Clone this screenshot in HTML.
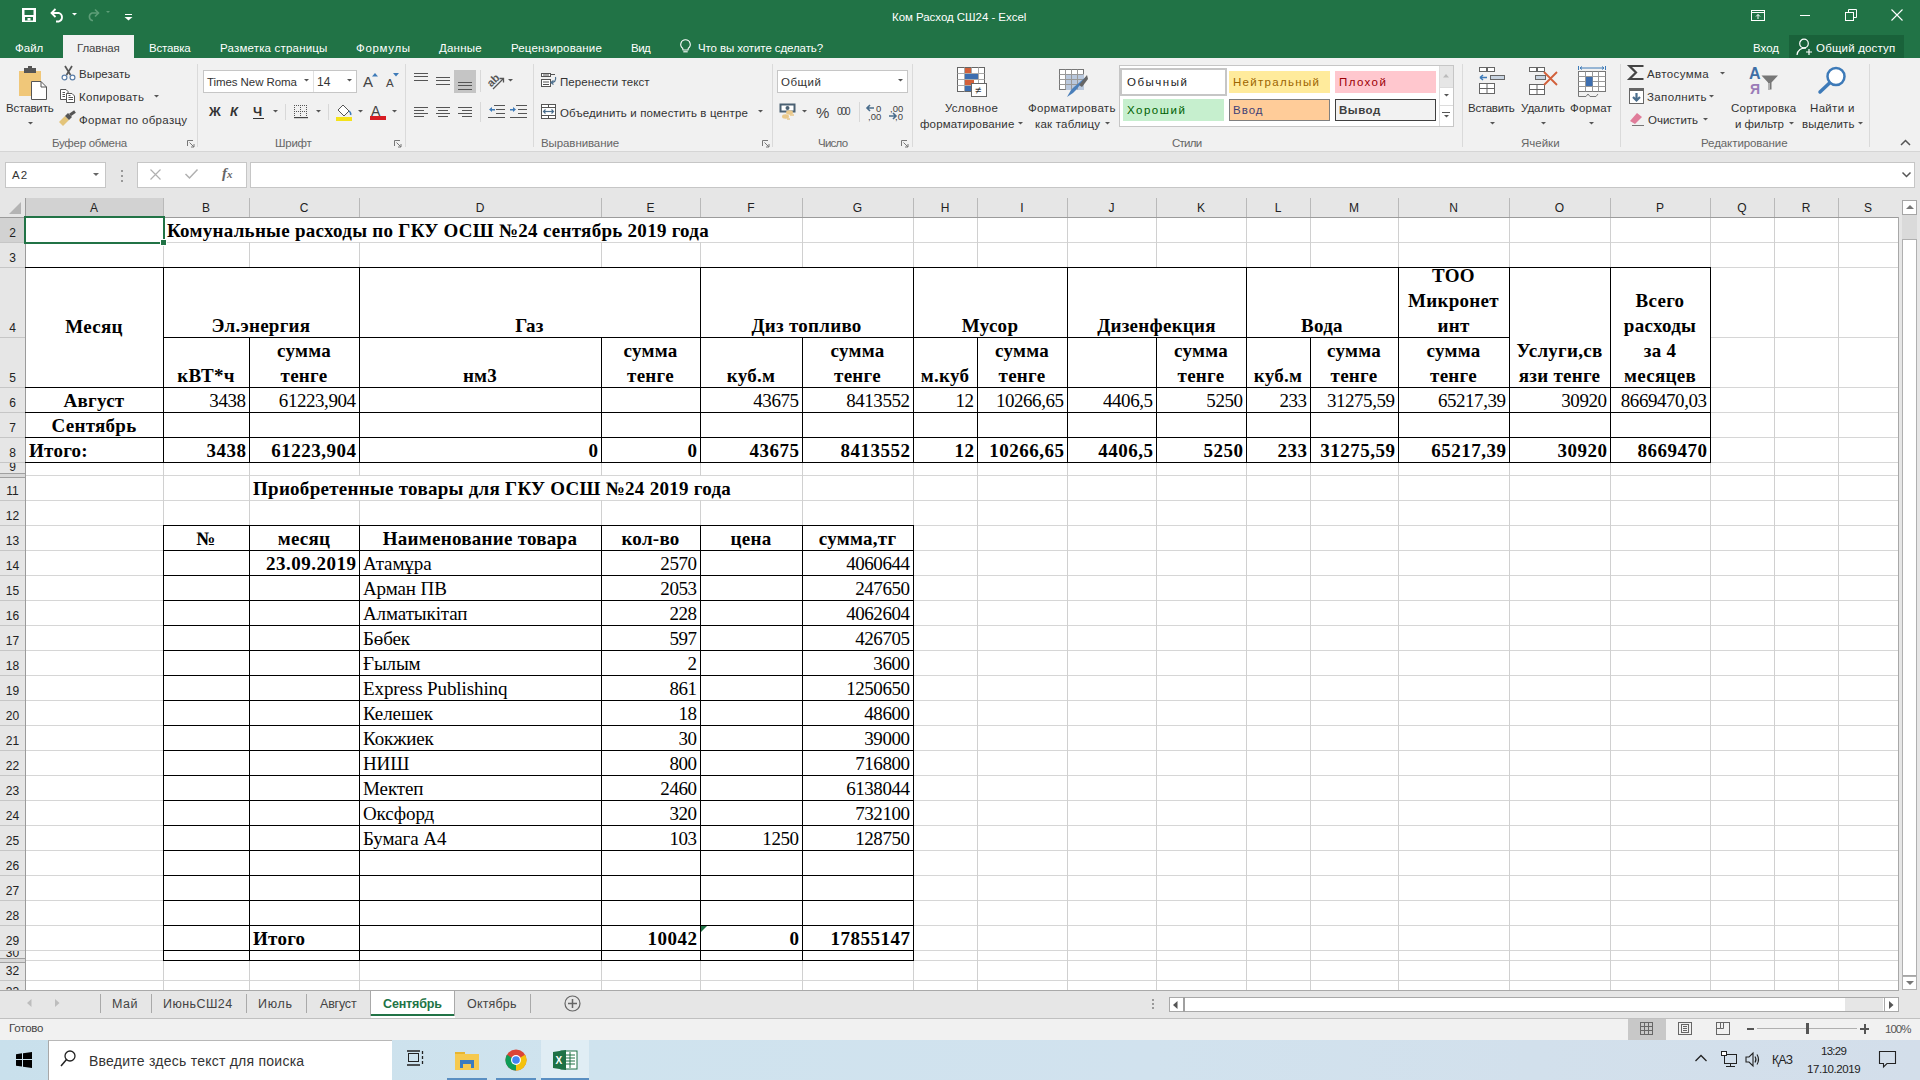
<!DOCTYPE html><html><head><meta charset="utf-8"><style>
*{margin:0;padding:0;box-sizing:border-box}
html,body{width:1920px;height:1080px;overflow:hidden;background:#fff;position:relative}
.a{position:absolute}
.x{position:absolute;white-space:nowrap}
svg{position:absolute;overflow:visible}
</style></head><body>
<div class="a" style="left:0px;top:188px;width:1920px;height:802px;background:#e6e6e6;"></div>
<div class="a" style="left:26px;top:218px;width:1872px;height:772px;background:#fff;"></div>
<div class="a" style="left:26px;top:198px;width:137px;height:19px;background:#d2d2d2;"></div>
<div class="a" style="left:0px;top:218px;width:25px;height:24px;background:#d2d2d2;"></div>
<div class="a" style="left:0px;top:217px;width:1898px;height:1px;background:#9b9b9b;"></div>
<div class="a" style="left:25px;top:198px;width:1px;height:792px;background:#9b9b9b;"></div>
<div class="a" style="left:163px;top:198px;width:1px;height:19px;background:#b9b9b9;"></div>
<div class="a" style="left:249px;top:198px;width:1px;height:19px;background:#b9b9b9;"></div>
<div class="a" style="left:359px;top:198px;width:1px;height:19px;background:#b9b9b9;"></div>
<div class="a" style="left:601px;top:198px;width:1px;height:19px;background:#b9b9b9;"></div>
<div class="a" style="left:700px;top:198px;width:1px;height:19px;background:#b9b9b9;"></div>
<div class="a" style="left:802px;top:198px;width:1px;height:19px;background:#b9b9b9;"></div>
<div class="a" style="left:913px;top:198px;width:1px;height:19px;background:#b9b9b9;"></div>
<div class="a" style="left:977px;top:198px;width:1px;height:19px;background:#b9b9b9;"></div>
<div class="a" style="left:1067px;top:198px;width:1px;height:19px;background:#b9b9b9;"></div>
<div class="a" style="left:1156px;top:198px;width:1px;height:19px;background:#b9b9b9;"></div>
<div class="a" style="left:1246px;top:198px;width:1px;height:19px;background:#b9b9b9;"></div>
<div class="a" style="left:1310px;top:198px;width:1px;height:19px;background:#b9b9b9;"></div>
<div class="a" style="left:1398px;top:198px;width:1px;height:19px;background:#b9b9b9;"></div>
<div class="a" style="left:1509px;top:198px;width:1px;height:19px;background:#b9b9b9;"></div>
<div class="a" style="left:1610px;top:198px;width:1px;height:19px;background:#b9b9b9;"></div>
<div class="a" style="left:1710px;top:198px;width:1px;height:19px;background:#b9b9b9;"></div>
<div class="a" style="left:1774px;top:198px;width:1px;height:19px;background:#b9b9b9;"></div>
<div class="a" style="left:1838px;top:198px;width:1px;height:19px;background:#b9b9b9;"></div>
<div class="x" style="top:202.00px;font-size:12px;line-height:12px;color:#222;font-family:'Liberation Sans',sans-serif;left:-406.0px;width:1000px;text-align:center;">A</div>
<div class="x" style="top:202.00px;font-size:12px;line-height:12px;color:#222;font-family:'Liberation Sans',sans-serif;left:-294.0px;width:1000px;text-align:center;">B</div>
<div class="x" style="top:202.00px;font-size:12px;line-height:12px;color:#222;font-family:'Liberation Sans',sans-serif;left:-196.0px;width:1000px;text-align:center;">C</div>
<div class="x" style="top:202.00px;font-size:12px;line-height:12px;color:#222;font-family:'Liberation Sans',sans-serif;left:-20.0px;width:1000px;text-align:center;">D</div>
<div class="x" style="top:202.00px;font-size:12px;line-height:12px;color:#222;font-family:'Liberation Sans',sans-serif;left:150.5px;width:1000px;text-align:center;">E</div>
<div class="x" style="top:202.00px;font-size:12px;line-height:12px;color:#222;font-family:'Liberation Sans',sans-serif;left:251.0px;width:1000px;text-align:center;">F</div>
<div class="x" style="top:202.00px;font-size:12px;line-height:12px;color:#222;font-family:'Liberation Sans',sans-serif;left:357.5px;width:1000px;text-align:center;">G</div>
<div class="x" style="top:202.00px;font-size:12px;line-height:12px;color:#222;font-family:'Liberation Sans',sans-serif;left:445.0px;width:1000px;text-align:center;">H</div>
<div class="x" style="top:202.00px;font-size:12px;line-height:12px;color:#222;font-family:'Liberation Sans',sans-serif;left:522.0px;width:1000px;text-align:center;">I</div>
<div class="x" style="top:202.00px;font-size:12px;line-height:12px;color:#222;font-family:'Liberation Sans',sans-serif;left:611.5px;width:1000px;text-align:center;">J</div>
<div class="x" style="top:202.00px;font-size:12px;line-height:12px;color:#222;font-family:'Liberation Sans',sans-serif;left:701.0px;width:1000px;text-align:center;">K</div>
<div class="x" style="top:202.00px;font-size:12px;line-height:12px;color:#222;font-family:'Liberation Sans',sans-serif;left:778.0px;width:1000px;text-align:center;">L</div>
<div class="x" style="top:202.00px;font-size:12px;line-height:12px;color:#222;font-family:'Liberation Sans',sans-serif;left:854.0px;width:1000px;text-align:center;">M</div>
<div class="x" style="top:202.00px;font-size:12px;line-height:12px;color:#222;font-family:'Liberation Sans',sans-serif;left:953.5px;width:1000px;text-align:center;">N</div>
<div class="x" style="top:202.00px;font-size:12px;line-height:12px;color:#222;font-family:'Liberation Sans',sans-serif;left:1059.5px;width:1000px;text-align:center;">O</div>
<div class="x" style="top:202.00px;font-size:12px;line-height:12px;color:#222;font-family:'Liberation Sans',sans-serif;left:1160.0px;width:1000px;text-align:center;">P</div>
<div class="x" style="top:202.00px;font-size:12px;line-height:12px;color:#222;font-family:'Liberation Sans',sans-serif;left:1242.0px;width:1000px;text-align:center;">Q</div>
<div class="x" style="top:202.00px;font-size:12px;line-height:12px;color:#222;font-family:'Liberation Sans',sans-serif;left:1306.0px;width:1000px;text-align:center;">R</div>
<div class="x" style="top:202.00px;font-size:12px;line-height:12px;color:#222;font-family:'Liberation Sans',sans-serif;left:1368.0px;width:1000px;text-align:center;">S</div>
<svg style="left:8px;top:202px" width="14" height="13"><polygon points="13,0 13,12 1,12" fill="#b4b4b4"/></svg>
<div class="a" style="left:0px;top:242px;width:25px;height:1px;background:#c6c6c6;"></div>
<div class="a" style="left:26px;top:242px;width:1872px;height:1px;background:#d6d6d6;"></div>
<div class="a" style="left:0px;top:267px;width:25px;height:1px;background:#c6c6c6;"></div>
<div class="a" style="left:26px;top:267px;width:1872px;height:1px;background:#d6d6d6;"></div>
<div class="a" style="left:0px;top:337px;width:25px;height:1px;background:#c6c6c6;"></div>
<div class="a" style="left:26px;top:337px;width:1872px;height:1px;background:#d6d6d6;"></div>
<div class="a" style="left:0px;top:387px;width:25px;height:1px;background:#c6c6c6;"></div>
<div class="a" style="left:26px;top:387px;width:1872px;height:1px;background:#d6d6d6;"></div>
<div class="a" style="left:0px;top:412px;width:25px;height:1px;background:#c6c6c6;"></div>
<div class="a" style="left:26px;top:412px;width:1872px;height:1px;background:#d6d6d6;"></div>
<div class="a" style="left:0px;top:437px;width:25px;height:1px;background:#c6c6c6;"></div>
<div class="a" style="left:26px;top:437px;width:1872px;height:1px;background:#d6d6d6;"></div>
<div class="a" style="left:0px;top:462px;width:25px;height:1px;background:#c6c6c6;"></div>
<div class="a" style="left:26px;top:462px;width:1872px;height:1px;background:#d6d6d6;"></div>
<div class="a" style="left:26px;top:475px;width:1872px;height:1px;background:#d6d6d6;"></div>
<div class="a" style="left:26px;top:475px;width:1872px;height:1px;background:#d6d6d6;"></div>
<div class="a" style="left:0px;top:500px;width:25px;height:1px;background:#c6c6c6;"></div>
<div class="a" style="left:26px;top:500px;width:1872px;height:1px;background:#d6d6d6;"></div>
<div class="a" style="left:0px;top:525px;width:25px;height:1px;background:#c6c6c6;"></div>
<div class="a" style="left:26px;top:525px;width:1872px;height:1px;background:#d6d6d6;"></div>
<div class="a" style="left:0px;top:550px;width:25px;height:1px;background:#c6c6c6;"></div>
<div class="a" style="left:26px;top:550px;width:1872px;height:1px;background:#d6d6d6;"></div>
<div class="a" style="left:0px;top:575px;width:25px;height:1px;background:#c6c6c6;"></div>
<div class="a" style="left:26px;top:575px;width:1872px;height:1px;background:#d6d6d6;"></div>
<div class="a" style="left:0px;top:600px;width:25px;height:1px;background:#c6c6c6;"></div>
<div class="a" style="left:26px;top:600px;width:1872px;height:1px;background:#d6d6d6;"></div>
<div class="a" style="left:0px;top:625px;width:25px;height:1px;background:#c6c6c6;"></div>
<div class="a" style="left:26px;top:625px;width:1872px;height:1px;background:#d6d6d6;"></div>
<div class="a" style="left:0px;top:650px;width:25px;height:1px;background:#c6c6c6;"></div>
<div class="a" style="left:26px;top:650px;width:1872px;height:1px;background:#d6d6d6;"></div>
<div class="a" style="left:0px;top:675px;width:25px;height:1px;background:#c6c6c6;"></div>
<div class="a" style="left:26px;top:675px;width:1872px;height:1px;background:#d6d6d6;"></div>
<div class="a" style="left:0px;top:700px;width:25px;height:1px;background:#c6c6c6;"></div>
<div class="a" style="left:26px;top:700px;width:1872px;height:1px;background:#d6d6d6;"></div>
<div class="a" style="left:0px;top:725px;width:25px;height:1px;background:#c6c6c6;"></div>
<div class="a" style="left:26px;top:725px;width:1872px;height:1px;background:#d6d6d6;"></div>
<div class="a" style="left:0px;top:750px;width:25px;height:1px;background:#c6c6c6;"></div>
<div class="a" style="left:26px;top:750px;width:1872px;height:1px;background:#d6d6d6;"></div>
<div class="a" style="left:0px;top:775px;width:25px;height:1px;background:#c6c6c6;"></div>
<div class="a" style="left:26px;top:775px;width:1872px;height:1px;background:#d6d6d6;"></div>
<div class="a" style="left:0px;top:800px;width:25px;height:1px;background:#c6c6c6;"></div>
<div class="a" style="left:26px;top:800px;width:1872px;height:1px;background:#d6d6d6;"></div>
<div class="a" style="left:0px;top:825px;width:25px;height:1px;background:#c6c6c6;"></div>
<div class="a" style="left:26px;top:825px;width:1872px;height:1px;background:#d6d6d6;"></div>
<div class="a" style="left:0px;top:850px;width:25px;height:1px;background:#c6c6c6;"></div>
<div class="a" style="left:26px;top:850px;width:1872px;height:1px;background:#d6d6d6;"></div>
<div class="a" style="left:0px;top:875px;width:25px;height:1px;background:#c6c6c6;"></div>
<div class="a" style="left:26px;top:875px;width:1872px;height:1px;background:#d6d6d6;"></div>
<div class="a" style="left:0px;top:900px;width:25px;height:1px;background:#c6c6c6;"></div>
<div class="a" style="left:26px;top:900px;width:1872px;height:1px;background:#d6d6d6;"></div>
<div class="a" style="left:0px;top:925px;width:25px;height:1px;background:#c6c6c6;"></div>
<div class="a" style="left:26px;top:925px;width:1872px;height:1px;background:#d6d6d6;"></div>
<div class="a" style="left:0px;top:950px;width:25px;height:1px;background:#c6c6c6;"></div>
<div class="a" style="left:26px;top:950px;width:1872px;height:1px;background:#d6d6d6;"></div>
<div class="a" style="left:26px;top:960px;width:1872px;height:1px;background:#d6d6d6;"></div>
<div class="a" style="left:26px;top:960px;width:1872px;height:1px;background:#d6d6d6;"></div>
<div class="a" style="left:0px;top:980px;width:25px;height:1px;background:#c6c6c6;"></div>
<div class="a" style="left:26px;top:980px;width:1872px;height:1px;background:#d6d6d6;"></div>
<div class="a" style="left:0px;top:1005px;width:25px;height:1px;background:#c6c6c6;"></div>
<div class="a" style="left:26px;top:1005px;width:1872px;height:1px;background:#d6d6d6;"></div>
<div class="a" style="left:163px;top:218px;width:1px;height:772px;background:#d0d0d0;"></div>
<div class="a" style="left:249px;top:218px;width:1px;height:772px;background:#d0d0d0;"></div>
<div class="a" style="left:359px;top:218px;width:1px;height:772px;background:#d0d0d0;"></div>
<div class="a" style="left:601px;top:218px;width:1px;height:772px;background:#d0d0d0;"></div>
<div class="a" style="left:700px;top:218px;width:1px;height:772px;background:#d0d0d0;"></div>
<div class="a" style="left:802px;top:218px;width:1px;height:772px;background:#d0d0d0;"></div>
<div class="a" style="left:913px;top:218px;width:1px;height:772px;background:#d0d0d0;"></div>
<div class="a" style="left:977px;top:218px;width:1px;height:772px;background:#d0d0d0;"></div>
<div class="a" style="left:1067px;top:218px;width:1px;height:772px;background:#d0d0d0;"></div>
<div class="a" style="left:1156px;top:218px;width:1px;height:772px;background:#d0d0d0;"></div>
<div class="a" style="left:1246px;top:218px;width:1px;height:772px;background:#d0d0d0;"></div>
<div class="a" style="left:1310px;top:218px;width:1px;height:772px;background:#d0d0d0;"></div>
<div class="a" style="left:1398px;top:218px;width:1px;height:772px;background:#d0d0d0;"></div>
<div class="a" style="left:1509px;top:218px;width:1px;height:772px;background:#d0d0d0;"></div>
<div class="a" style="left:1610px;top:218px;width:1px;height:772px;background:#d0d0d0;"></div>
<div class="a" style="left:1710px;top:218px;width:1px;height:772px;background:#d0d0d0;"></div>
<div class="a" style="left:1774px;top:218px;width:1px;height:772px;background:#d0d0d0;"></div>
<div class="a" style="left:1838px;top:218px;width:1px;height:772px;background:#d0d0d0;"></div>
<div class="a" style="left:1898px;top:217px;width:1px;height:773px;background:#a8a8a8;"></div>
<div class="a" style="left:249px;top:218px;width:1px;height:24px;background:#fff;"></div>
<div class="a" style="left:359px;top:218px;width:1px;height:24px;background:#fff;"></div>
<div class="a" style="left:601px;top:218px;width:1px;height:24px;background:#fff;"></div>
<div class="a" style="left:700px;top:218px;width:1px;height:24px;background:#fff;"></div>
<div class="a" style="left:359px;top:476px;width:1px;height:24px;background:#fff;"></div>
<div class="a" style="left:601px;top:476px;width:1px;height:24px;background:#fff;"></div>
<div class="a" style="left:700px;top:476px;width:1px;height:24px;background:#fff;"></div>
<div class="a" style="left:249px;top:268px;width:1px;height:69px;background:#fff;"></div>
<div class="a" style="left:601px;top:268px;width:1px;height:69px;background:#fff;"></div>
<div class="a" style="left:802px;top:268px;width:1px;height:69px;background:#fff;"></div>
<div class="a" style="left:977px;top:268px;width:1px;height:69px;background:#fff;"></div>
<div class="a" style="left:1156px;top:268px;width:1px;height:69px;background:#fff;"></div>
<div class="a" style="left:1310px;top:268px;width:1px;height:69px;background:#fff;"></div>
<div class="a" style="left:26px;top:337px;width:137px;height:1px;background:#fff;"></div>
<div class="a" style="left:1510px;top:337px;width:100px;height:1px;background:#fff;"></div>
<div class="a" style="left:1611px;top:337px;width:99px;height:1px;background:#fff;"></div>
<div class="a" style="left:0px;top:473px;width:25px;height:1px;background:#a0a0a0;"></div>
<div class="a" style="left:0px;top:474px;width:25px;height:3px;background:#d8d8d8;"></div>
<div class="a" style="left:0px;top:477px;width:25px;height:1px;background:#a0a0a0;"></div>
<div class="a" style="left:0px;top:958px;width:25px;height:1px;background:#a0a0a0;"></div>
<div class="a" style="left:0px;top:959px;width:25px;height:3px;background:#d8d8d8;"></div>
<div class="a" style="left:0px;top:962px;width:25px;height:1px;background:#a0a0a0;"></div>
<div class="a" style="left:0;top:218px;width:25px;height:24px;overflow:hidden">
<div class="x" style="top:9.00px;font-size:12px;line-height:12px;color:#222;font-family:'Liberation Sans',sans-serif;left:-487.5px;width:1000px;text-align:center;">2</div>
</div>
<div class="a" style="left:0;top:243px;width:25px;height:24px;overflow:hidden">
<div class="x" style="top:9.00px;font-size:12px;line-height:12px;color:#222;font-family:'Liberation Sans',sans-serif;left:-487.5px;width:1000px;text-align:center;">3</div>
</div>
<div class="a" style="left:0;top:268px;width:25px;height:69px;overflow:hidden">
<div class="x" style="top:54.00px;font-size:12px;line-height:12px;color:#222;font-family:'Liberation Sans',sans-serif;left:-487.5px;width:1000px;text-align:center;">4</div>
</div>
<div class="a" style="left:0;top:338px;width:25px;height:49px;overflow:hidden">
<div class="x" style="top:34.00px;font-size:12px;line-height:12px;color:#222;font-family:'Liberation Sans',sans-serif;left:-487.5px;width:1000px;text-align:center;">5</div>
</div>
<div class="a" style="left:0;top:388px;width:25px;height:24px;overflow:hidden">
<div class="x" style="top:9.00px;font-size:12px;line-height:12px;color:#222;font-family:'Liberation Sans',sans-serif;left:-487.5px;width:1000px;text-align:center;">6</div>
</div>
<div class="a" style="left:0;top:413px;width:25px;height:24px;overflow:hidden">
<div class="x" style="top:9.00px;font-size:12px;line-height:12px;color:#222;font-family:'Liberation Sans',sans-serif;left:-487.5px;width:1000px;text-align:center;">7</div>
</div>
<div class="a" style="left:0;top:438px;width:25px;height:24px;overflow:hidden">
<div class="x" style="top:9.00px;font-size:12px;line-height:12px;color:#222;font-family:'Liberation Sans',sans-serif;left:-487.5px;width:1000px;text-align:center;">8</div>
</div>
<div class="a" style="left:0;top:463px;width:25px;height:10px;overflow:hidden">
<div class="x" style="top:-2.00px;font-size:12px;line-height:12px;color:#222;font-family:'Liberation Sans',sans-serif;left:-487.5px;width:1000px;text-align:center;">9</div>
</div>
<div class="a" style="left:0;top:478px;width:25px;height:22px;overflow:hidden">
<div class="x" style="top:7.00px;font-size:12px;line-height:12px;color:#222;font-family:'Liberation Sans',sans-serif;left:-487.5px;width:1000px;text-align:center;">11</div>
</div>
<div class="a" style="left:0;top:501px;width:25px;height:24px;overflow:hidden">
<div class="x" style="top:9.00px;font-size:12px;line-height:12px;color:#222;font-family:'Liberation Sans',sans-serif;left:-487.5px;width:1000px;text-align:center;">12</div>
</div>
<div class="a" style="left:0;top:526px;width:25px;height:24px;overflow:hidden">
<div class="x" style="top:9.00px;font-size:12px;line-height:12px;color:#222;font-family:'Liberation Sans',sans-serif;left:-487.5px;width:1000px;text-align:center;">13</div>
</div>
<div class="a" style="left:0;top:551px;width:25px;height:24px;overflow:hidden">
<div class="x" style="top:9.00px;font-size:12px;line-height:12px;color:#222;font-family:'Liberation Sans',sans-serif;left:-487.5px;width:1000px;text-align:center;">14</div>
</div>
<div class="a" style="left:0;top:576px;width:25px;height:24px;overflow:hidden">
<div class="x" style="top:9.00px;font-size:12px;line-height:12px;color:#222;font-family:'Liberation Sans',sans-serif;left:-487.5px;width:1000px;text-align:center;">15</div>
</div>
<div class="a" style="left:0;top:601px;width:25px;height:24px;overflow:hidden">
<div class="x" style="top:9.00px;font-size:12px;line-height:12px;color:#222;font-family:'Liberation Sans',sans-serif;left:-487.5px;width:1000px;text-align:center;">16</div>
</div>
<div class="a" style="left:0;top:626px;width:25px;height:24px;overflow:hidden">
<div class="x" style="top:9.00px;font-size:12px;line-height:12px;color:#222;font-family:'Liberation Sans',sans-serif;left:-487.5px;width:1000px;text-align:center;">17</div>
</div>
<div class="a" style="left:0;top:651px;width:25px;height:24px;overflow:hidden">
<div class="x" style="top:9.00px;font-size:12px;line-height:12px;color:#222;font-family:'Liberation Sans',sans-serif;left:-487.5px;width:1000px;text-align:center;">18</div>
</div>
<div class="a" style="left:0;top:676px;width:25px;height:24px;overflow:hidden">
<div class="x" style="top:9.00px;font-size:12px;line-height:12px;color:#222;font-family:'Liberation Sans',sans-serif;left:-487.5px;width:1000px;text-align:center;">19</div>
</div>
<div class="a" style="left:0;top:701px;width:25px;height:24px;overflow:hidden">
<div class="x" style="top:9.00px;font-size:12px;line-height:12px;color:#222;font-family:'Liberation Sans',sans-serif;left:-487.5px;width:1000px;text-align:center;">20</div>
</div>
<div class="a" style="left:0;top:726px;width:25px;height:24px;overflow:hidden">
<div class="x" style="top:9.00px;font-size:12px;line-height:12px;color:#222;font-family:'Liberation Sans',sans-serif;left:-487.5px;width:1000px;text-align:center;">21</div>
</div>
<div class="a" style="left:0;top:751px;width:25px;height:24px;overflow:hidden">
<div class="x" style="top:9.00px;font-size:12px;line-height:12px;color:#222;font-family:'Liberation Sans',sans-serif;left:-487.5px;width:1000px;text-align:center;">22</div>
</div>
<div class="a" style="left:0;top:776px;width:25px;height:24px;overflow:hidden">
<div class="x" style="top:9.00px;font-size:12px;line-height:12px;color:#222;font-family:'Liberation Sans',sans-serif;left:-487.5px;width:1000px;text-align:center;">23</div>
</div>
<div class="a" style="left:0;top:801px;width:25px;height:24px;overflow:hidden">
<div class="x" style="top:9.00px;font-size:12px;line-height:12px;color:#222;font-family:'Liberation Sans',sans-serif;left:-487.5px;width:1000px;text-align:center;">24</div>
</div>
<div class="a" style="left:0;top:826px;width:25px;height:24px;overflow:hidden">
<div class="x" style="top:9.00px;font-size:12px;line-height:12px;color:#222;font-family:'Liberation Sans',sans-serif;left:-487.5px;width:1000px;text-align:center;">25</div>
</div>
<div class="a" style="left:0;top:851px;width:25px;height:24px;overflow:hidden">
<div class="x" style="top:9.00px;font-size:12px;line-height:12px;color:#222;font-family:'Liberation Sans',sans-serif;left:-487.5px;width:1000px;text-align:center;">26</div>
</div>
<div class="a" style="left:0;top:876px;width:25px;height:24px;overflow:hidden">
<div class="x" style="top:9.00px;font-size:12px;line-height:12px;color:#222;font-family:'Liberation Sans',sans-serif;left:-487.5px;width:1000px;text-align:center;">27</div>
</div>
<div class="a" style="left:0;top:901px;width:25px;height:24px;overflow:hidden">
<div class="x" style="top:9.00px;font-size:12px;line-height:12px;color:#222;font-family:'Liberation Sans',sans-serif;left:-487.5px;width:1000px;text-align:center;">28</div>
</div>
<div class="a" style="left:0;top:926px;width:25px;height:24px;overflow:hidden">
<div class="x" style="top:9.00px;font-size:12px;line-height:12px;color:#222;font-family:'Liberation Sans',sans-serif;left:-487.5px;width:1000px;text-align:center;">29</div>
</div>
<div class="a" style="left:0;top:951px;width:25px;height:7px;overflow:hidden">
<div class="x" style="top:-4.00px;font-size:12px;line-height:12px;color:#222;font-family:'Liberation Sans',sans-serif;left:-487.5px;width:1000px;text-align:center;">30</div>
</div>
<div class="a" style="left:0;top:961px;width:25px;height:-1px;overflow:hidden">
<div class="x" style="top:-16.00px;font-size:12px;line-height:12px;color:#222;font-family:'Liberation Sans',sans-serif;left:-487.5px;width:1000px;text-align:center;">31</div>
</div>
<div class="a" style="left:0;top:963px;width:25px;height:17px;overflow:hidden">
<div class="x" style="top:2.00px;font-size:12px;line-height:12px;color:#222;font-family:'Liberation Sans',sans-serif;left:-487.5px;width:1000px;text-align:center;">32</div>
</div>
<div class="a" style="left:0;top:982px;width:25px;height:8px;overflow:hidden">
<div class="x" style="top:4.00px;font-size:12px;line-height:12px;color:#222;font-family:'Liberation Sans',sans-serif;left:-487.5px;width:1000px;text-align:center;">33</div>
</div>
<div class="x" style="top:221.00px;font-size:19px;line-height:19px;color:#000;font-family:'Liberation Serif',serif;font-weight:bold;left:167px;letter-spacing:0.27px;">Комунальные расходы по ГКУ ОСШ №24 сентябрь 2019 года</div>
<div class="x" style="top:317.00px;font-size:19px;line-height:19px;color:#000;font-family:'Liberation Serif',serif;font-weight:bold;left:-406.0px;width:1000px;text-align:center;letter-spacing:0.27px;">Месяц</div>
<div class="x" style="top:316.00px;font-size:19px;line-height:19px;color:#000;font-family:'Liberation Serif',serif;font-weight:bold;left:-239.0px;width:1000px;text-align:center;letter-spacing:0.27px;">Эл.энергия</div>
<div class="x" style="top:316.00px;font-size:19px;line-height:19px;color:#000;font-family:'Liberation Serif',serif;font-weight:bold;left:29.5px;width:1000px;text-align:center;letter-spacing:0.27px;">Газ</div>
<div class="x" style="top:316.00px;font-size:19px;line-height:19px;color:#000;font-family:'Liberation Serif',serif;font-weight:bold;left:306.5px;width:1000px;text-align:center;letter-spacing:0.27px;">Диз топливо</div>
<div class="x" style="top:316.00px;font-size:19px;line-height:19px;color:#000;font-family:'Liberation Serif',serif;font-weight:bold;left:490.0px;width:1000px;text-align:center;letter-spacing:0.27px;">Мусор</div>
<div class="x" style="top:316.00px;font-size:19px;line-height:19px;color:#000;font-family:'Liberation Serif',serif;font-weight:bold;left:656.5px;width:1000px;text-align:center;letter-spacing:0.27px;">Дизенфекция</div>
<div class="x" style="top:316.00px;font-size:19px;line-height:19px;color:#000;font-family:'Liberation Serif',serif;font-weight:bold;left:822.0px;width:1000px;text-align:center;letter-spacing:0.27px;">Вода</div>
<div class="x" style="top:266.00px;font-size:19px;line-height:19px;color:#000;font-family:'Liberation Serif',serif;font-weight:bold;left:953.5px;width:1000px;text-align:center;letter-spacing:0.27px;">ТОО</div>
<div class="x" style="top:291.00px;font-size:19px;line-height:19px;color:#000;font-family:'Liberation Serif',serif;font-weight:bold;left:953.5px;width:1000px;text-align:center;letter-spacing:0.27px;">Микронет</div>
<div class="x" style="top:316.00px;font-size:19px;line-height:19px;color:#000;font-family:'Liberation Serif',serif;font-weight:bold;left:953.5px;width:1000px;text-align:center;letter-spacing:0.27px;">инт</div>
<div class="x" style="top:366.00px;font-size:19px;line-height:19px;color:#000;font-family:'Liberation Serif',serif;font-weight:bold;left:-294.0px;width:1000px;text-align:center;letter-spacing:0.27px;">кВТ*ч</div>
<div class="x" style="top:366.00px;font-size:19px;line-height:19px;color:#000;font-family:'Liberation Serif',serif;font-weight:bold;left:-20.0px;width:1000px;text-align:center;letter-spacing:0.27px;">нм3</div>
<div class="x" style="top:366.00px;font-size:19px;line-height:19px;color:#000;font-family:'Liberation Serif',serif;font-weight:bold;left:251.0px;width:1000px;text-align:center;letter-spacing:0.27px;">куб.м</div>
<div class="x" style="top:366.00px;font-size:19px;line-height:19px;color:#000;font-family:'Liberation Serif',serif;font-weight:bold;left:445.0px;width:1000px;text-align:center;letter-spacing:0.27px;">м.куб</div>
<div class="x" style="top:366.00px;font-size:19px;line-height:19px;color:#000;font-family:'Liberation Serif',serif;font-weight:bold;left:778.0px;width:1000px;text-align:center;letter-spacing:0.27px;">куб.м</div>
<div class="x" style="top:341.00px;font-size:19px;line-height:19px;color:#000;font-family:'Liberation Serif',serif;font-weight:bold;left:-196.0px;width:1000px;text-align:center;letter-spacing:0.27px;">сумма</div>
<div class="x" style="top:366.00px;font-size:19px;line-height:19px;color:#000;font-family:'Liberation Serif',serif;font-weight:bold;left:-196.0px;width:1000px;text-align:center;letter-spacing:0.27px;">тенге</div>
<div class="x" style="top:341.00px;font-size:19px;line-height:19px;color:#000;font-family:'Liberation Serif',serif;font-weight:bold;left:150.5px;width:1000px;text-align:center;letter-spacing:0.27px;">сумма</div>
<div class="x" style="top:366.00px;font-size:19px;line-height:19px;color:#000;font-family:'Liberation Serif',serif;font-weight:bold;left:150.5px;width:1000px;text-align:center;letter-spacing:0.27px;">тенге</div>
<div class="x" style="top:341.00px;font-size:19px;line-height:19px;color:#000;font-family:'Liberation Serif',serif;font-weight:bold;left:357.5px;width:1000px;text-align:center;letter-spacing:0.27px;">сумма</div>
<div class="x" style="top:366.00px;font-size:19px;line-height:19px;color:#000;font-family:'Liberation Serif',serif;font-weight:bold;left:357.5px;width:1000px;text-align:center;letter-spacing:0.27px;">тенге</div>
<div class="x" style="top:341.00px;font-size:19px;line-height:19px;color:#000;font-family:'Liberation Serif',serif;font-weight:bold;left:522.0px;width:1000px;text-align:center;letter-spacing:0.27px;">сумма</div>
<div class="x" style="top:366.00px;font-size:19px;line-height:19px;color:#000;font-family:'Liberation Serif',serif;font-weight:bold;left:522.0px;width:1000px;text-align:center;letter-spacing:0.27px;">тенге</div>
<div class="x" style="top:341.00px;font-size:19px;line-height:19px;color:#000;font-family:'Liberation Serif',serif;font-weight:bold;left:701.0px;width:1000px;text-align:center;letter-spacing:0.27px;">сумма</div>
<div class="x" style="top:366.00px;font-size:19px;line-height:19px;color:#000;font-family:'Liberation Serif',serif;font-weight:bold;left:701.0px;width:1000px;text-align:center;letter-spacing:0.27px;">тенге</div>
<div class="x" style="top:341.00px;font-size:19px;line-height:19px;color:#000;font-family:'Liberation Serif',serif;font-weight:bold;left:854.0px;width:1000px;text-align:center;letter-spacing:0.27px;">сумма</div>
<div class="x" style="top:366.00px;font-size:19px;line-height:19px;color:#000;font-family:'Liberation Serif',serif;font-weight:bold;left:854.0px;width:1000px;text-align:center;letter-spacing:0.27px;">тенге</div>
<div class="x" style="top:341.00px;font-size:19px;line-height:19px;color:#000;font-family:'Liberation Serif',serif;font-weight:bold;left:953.5px;width:1000px;text-align:center;letter-spacing:0.27px;">сумма</div>
<div class="x" style="top:366.00px;font-size:19px;line-height:19px;color:#000;font-family:'Liberation Serif',serif;font-weight:bold;left:953.5px;width:1000px;text-align:center;letter-spacing:0.27px;">тенге</div>
<div class="x" style="top:341.00px;font-size:19px;line-height:19px;color:#000;font-family:'Liberation Serif',serif;font-weight:bold;left:1059.5px;width:1000px;text-align:center;letter-spacing:0.27px;">Услуги,св</div>
<div class="x" style="top:366.00px;font-size:19px;line-height:19px;color:#000;font-family:'Liberation Serif',serif;font-weight:bold;left:1059.5px;width:1000px;text-align:center;letter-spacing:0.27px;">язи тенге</div>
<div class="x" style="top:291.00px;font-size:19px;line-height:19px;color:#000;font-family:'Liberation Serif',serif;font-weight:bold;left:1160.0px;width:1000px;text-align:center;letter-spacing:0.27px;">Всего</div>
<div class="x" style="top:316.00px;font-size:19px;line-height:19px;color:#000;font-family:'Liberation Serif',serif;font-weight:bold;left:1160.0px;width:1000px;text-align:center;letter-spacing:0.27px;">расходы</div>
<div class="x" style="top:341.00px;font-size:19px;line-height:19px;color:#000;font-family:'Liberation Serif',serif;font-weight:bold;left:1160.0px;width:1000px;text-align:center;letter-spacing:0.27px;">за 4</div>
<div class="x" style="top:366.00px;font-size:19px;line-height:19px;color:#000;font-family:'Liberation Serif',serif;font-weight:bold;left:1160.0px;width:1000px;text-align:center;letter-spacing:0.27px;">месяцев</div>
<div class="x" style="top:391.00px;font-size:19px;line-height:19px;color:#000;font-family:'Liberation Serif',serif;font-weight:bold;left:-406.0px;width:1000px;text-align:center;letter-spacing:0.27px;">Август</div>
<div class="x" style="top:391.00px;font-size:19px;line-height:19px;color:#000;font-family:'Liberation Serif',serif;right:1674.45px;text-align:right;letter-spacing:-0.45px;">3438</div>
<div class="x" style="top:391.00px;font-size:19px;line-height:19px;color:#000;font-family:'Liberation Serif',serif;right:1564.45px;text-align:right;letter-spacing:-0.45px;">61223,904</div>
<div class="x" style="top:391.00px;font-size:19px;line-height:19px;color:#000;font-family:'Liberation Serif',serif;right:1121.45px;text-align:right;letter-spacing:-0.45px;">43675</div>
<div class="x" style="top:391.00px;font-size:19px;line-height:19px;color:#000;font-family:'Liberation Serif',serif;right:1010.45px;text-align:right;letter-spacing:-0.45px;">8413552</div>
<div class="x" style="top:391.00px;font-size:19px;line-height:19px;color:#000;font-family:'Liberation Serif',serif;right:946.45px;text-align:right;letter-spacing:-0.45px;">12</div>
<div class="x" style="top:391.00px;font-size:19px;line-height:19px;color:#000;font-family:'Liberation Serif',serif;right:856.45px;text-align:right;letter-spacing:-0.45px;">10266,65</div>
<div class="x" style="top:391.00px;font-size:19px;line-height:19px;color:#000;font-family:'Liberation Serif',serif;right:767.45px;text-align:right;letter-spacing:-0.45px;">4406,5</div>
<div class="x" style="top:391.00px;font-size:19px;line-height:19px;color:#000;font-family:'Liberation Serif',serif;right:677.45px;text-align:right;letter-spacing:-0.45px;">5250</div>
<div class="x" style="top:391.00px;font-size:19px;line-height:19px;color:#000;font-family:'Liberation Serif',serif;right:613.45px;text-align:right;letter-spacing:-0.45px;">233</div>
<div class="x" style="top:391.00px;font-size:19px;line-height:19px;color:#000;font-family:'Liberation Serif',serif;right:525.45px;text-align:right;letter-spacing:-0.45px;">31275,59</div>
<div class="x" style="top:391.00px;font-size:19px;line-height:19px;color:#000;font-family:'Liberation Serif',serif;right:414.45000000000005px;text-align:right;letter-spacing:-0.45px;">65217,39</div>
<div class="x" style="top:391.00px;font-size:19px;line-height:19px;color:#000;font-family:'Liberation Serif',serif;right:313.45000000000005px;text-align:right;letter-spacing:-0.45px;">30920</div>
<div class="x" style="top:391.00px;font-size:19px;line-height:19px;color:#000;font-family:'Liberation Serif',serif;right:213.45000000000005px;text-align:right;letter-spacing:-0.45px;">8669470,03</div>
<div class="x" style="top:416.00px;font-size:19px;line-height:19px;color:#000;font-family:'Liberation Serif',serif;font-weight:bold;left:-406.0px;width:1000px;text-align:center;letter-spacing:0.27px;">Сентябрь</div>
<div class="x" style="top:441.00px;font-size:19px;line-height:19px;color:#000;font-family:'Liberation Serif',serif;font-weight:bold;left:29px;letter-spacing:0.27px;">Итого:</div>
<div class="x" style="top:441.00px;font-size:19px;line-height:19px;color:#000;font-family:'Liberation Serif',serif;font-weight:bold;right:1673.5px;text-align:right;letter-spacing:0.5px;">3438</div>
<div class="x" style="top:441.00px;font-size:19px;line-height:19px;color:#000;font-family:'Liberation Serif',serif;font-weight:bold;right:1563.5px;text-align:right;letter-spacing:0.5px;">61223,904</div>
<div class="x" style="top:441.00px;font-size:19px;line-height:19px;color:#000;font-family:'Liberation Serif',serif;font-weight:bold;right:1321.5px;text-align:right;letter-spacing:0.5px;">0</div>
<div class="x" style="top:441.00px;font-size:19px;line-height:19px;color:#000;font-family:'Liberation Serif',serif;font-weight:bold;right:1222.5px;text-align:right;letter-spacing:0.5px;">0</div>
<div class="x" style="top:441.00px;font-size:19px;line-height:19px;color:#000;font-family:'Liberation Serif',serif;font-weight:bold;right:1120.5px;text-align:right;letter-spacing:0.5px;">43675</div>
<div class="x" style="top:441.00px;font-size:19px;line-height:19px;color:#000;font-family:'Liberation Serif',serif;font-weight:bold;right:1009.5px;text-align:right;letter-spacing:0.5px;">8413552</div>
<div class="x" style="top:441.00px;font-size:19px;line-height:19px;color:#000;font-family:'Liberation Serif',serif;font-weight:bold;right:945.5px;text-align:right;letter-spacing:0.5px;">12</div>
<div class="x" style="top:441.00px;font-size:19px;line-height:19px;color:#000;font-family:'Liberation Serif',serif;font-weight:bold;right:855.5px;text-align:right;letter-spacing:0.5px;">10266,65</div>
<div class="x" style="top:441.00px;font-size:19px;line-height:19px;color:#000;font-family:'Liberation Serif',serif;font-weight:bold;right:766.5px;text-align:right;letter-spacing:0.5px;">4406,5</div>
<div class="x" style="top:441.00px;font-size:19px;line-height:19px;color:#000;font-family:'Liberation Serif',serif;font-weight:bold;right:676.5px;text-align:right;letter-spacing:0.5px;">5250</div>
<div class="x" style="top:441.00px;font-size:19px;line-height:19px;color:#000;font-family:'Liberation Serif',serif;font-weight:bold;right:612.5px;text-align:right;letter-spacing:0.5px;">233</div>
<div class="x" style="top:441.00px;font-size:19px;line-height:19px;color:#000;font-family:'Liberation Serif',serif;font-weight:bold;right:524.5px;text-align:right;letter-spacing:0.5px;">31275,59</div>
<div class="x" style="top:441.00px;font-size:19px;line-height:19px;color:#000;font-family:'Liberation Serif',serif;font-weight:bold;right:413.5px;text-align:right;letter-spacing:0.5px;">65217,39</div>
<div class="x" style="top:441.00px;font-size:19px;line-height:19px;color:#000;font-family:'Liberation Serif',serif;font-weight:bold;right:312.5px;text-align:right;letter-spacing:0.5px;">30920</div>
<div class="x" style="top:441.00px;font-size:19px;line-height:19px;color:#000;font-family:'Liberation Serif',serif;font-weight:bold;right:212.5px;text-align:right;letter-spacing:0.5px;">8669470</div>
<div class="a" style="left:25px;top:267px;width:1686px;height:1px;background:#000;"></div>
<div class="a" style="left:25px;top:387px;width:1686px;height:1px;background:#000;"></div>
<div class="a" style="left:25px;top:412px;width:1686px;height:1px;background:#000;"></div>
<div class="a" style="left:25px;top:437px;width:1686px;height:1px;background:#000;"></div>
<div class="a" style="left:25px;top:462px;width:1686px;height:1px;background:#000;"></div>
<div class="a" style="left:163px;top:337px;width:1346px;height:1px;background:#000;"></div>
<div class="a" style="left:163px;top:267px;width:1px;height:196px;background:#000;"></div>
<div class="a" style="left:249px;top:337px;width:1px;height:126px;background:#000;"></div>
<div class="a" style="left:359px;top:267px;width:1px;height:196px;background:#000;"></div>
<div class="a" style="left:601px;top:337px;width:1px;height:126px;background:#000;"></div>
<div class="a" style="left:700px;top:267px;width:1px;height:196px;background:#000;"></div>
<div class="a" style="left:802px;top:337px;width:1px;height:126px;background:#000;"></div>
<div class="a" style="left:913px;top:267px;width:1px;height:196px;background:#000;"></div>
<div class="a" style="left:977px;top:337px;width:1px;height:126px;background:#000;"></div>
<div class="a" style="left:1067px;top:267px;width:1px;height:196px;background:#000;"></div>
<div class="a" style="left:1156px;top:337px;width:1px;height:126px;background:#000;"></div>
<div class="a" style="left:1246px;top:267px;width:1px;height:196px;background:#000;"></div>
<div class="a" style="left:1310px;top:337px;width:1px;height:126px;background:#000;"></div>
<div class="a" style="left:1398px;top:267px;width:1px;height:196px;background:#000;"></div>
<div class="a" style="left:1509px;top:267px;width:1px;height:196px;background:#000;"></div>
<div class="a" style="left:1610px;top:267px;width:1px;height:196px;background:#000;"></div>
<div class="a" style="left:1710px;top:267px;width:1px;height:196px;background:#000;"></div>
<div class="x" style="top:479.00px;font-size:19px;line-height:19px;color:#000;font-family:'Liberation Serif',serif;font-weight:bold;left:253px;letter-spacing:0.27px;">Приобретенные товары для ГКУ ОСШ №24 2019 года</div>
<div class="x" style="top:529.00px;font-size:19px;line-height:19px;color:#000;font-family:'Liberation Serif',serif;font-weight:bold;left:-294.0px;width:1000px;text-align:center;letter-spacing:0.27px;">№</div>
<div class="x" style="top:529.00px;font-size:19px;line-height:19px;color:#000;font-family:'Liberation Serif',serif;font-weight:bold;left:-196.0px;width:1000px;text-align:center;letter-spacing:0.27px;">месяц</div>
<div class="x" style="top:529.00px;font-size:19px;line-height:19px;color:#000;font-family:'Liberation Serif',serif;font-weight:bold;left:-20.0px;width:1000px;text-align:center;letter-spacing:0.27px;">Наименование товара</div>
<div class="x" style="top:529.00px;font-size:19px;line-height:19px;color:#000;font-family:'Liberation Serif',serif;font-weight:bold;left:150.5px;width:1000px;text-align:center;letter-spacing:0.27px;">кол-во</div>
<div class="x" style="top:529.00px;font-size:19px;line-height:19px;color:#000;font-family:'Liberation Serif',serif;font-weight:bold;left:251.0px;width:1000px;text-align:center;letter-spacing:0.27px;">цена</div>
<div class="x" style="top:529.00px;font-size:19px;line-height:19px;color:#000;font-family:'Liberation Serif',serif;font-weight:bold;left:357.5px;width:1000px;text-align:center;letter-spacing:0.27px;">сумма,тг</div>
<div class="x" style="top:554.00px;font-size:19px;line-height:19px;color:#000;font-family:'Liberation Serif',serif;font-weight:bold;right:1563.5px;text-align:right;letter-spacing:0.5px;">23.09.2019</div>
<div class="x" style="top:554.00px;font-size:19px;line-height:19px;color:#000;font-family:'Liberation Serif',serif;left:363px;letter-spacing:-0.1px;">Атамұра</div>
<div class="x" style="top:554.00px;font-size:19px;line-height:19px;color:#000;font-family:'Liberation Serif',serif;right:1223.45px;text-align:right;letter-spacing:-0.45px;">2570</div>
<div class="x" style="top:554.00px;font-size:19px;line-height:19px;color:#000;font-family:'Liberation Serif',serif;right:1010.45px;text-align:right;letter-spacing:-0.45px;">4060644</div>
<div class="x" style="top:579.00px;font-size:19px;line-height:19px;color:#000;font-family:'Liberation Serif',serif;left:363px;letter-spacing:-0.1px;">Арман ПВ</div>
<div class="x" style="top:579.00px;font-size:19px;line-height:19px;color:#000;font-family:'Liberation Serif',serif;right:1223.45px;text-align:right;letter-spacing:-0.45px;">2053</div>
<div class="x" style="top:579.00px;font-size:19px;line-height:19px;color:#000;font-family:'Liberation Serif',serif;right:1010.45px;text-align:right;letter-spacing:-0.45px;">247650</div>
<div class="x" style="top:604.00px;font-size:19px;line-height:19px;color:#000;font-family:'Liberation Serif',serif;left:363px;letter-spacing:-0.1px;">Алматыкітап</div>
<div class="x" style="top:604.00px;font-size:19px;line-height:19px;color:#000;font-family:'Liberation Serif',serif;right:1223.45px;text-align:right;letter-spacing:-0.45px;">228</div>
<div class="x" style="top:604.00px;font-size:19px;line-height:19px;color:#000;font-family:'Liberation Serif',serif;right:1010.45px;text-align:right;letter-spacing:-0.45px;">4062604</div>
<div class="x" style="top:629.00px;font-size:19px;line-height:19px;color:#000;font-family:'Liberation Serif',serif;left:363px;letter-spacing:-0.1px;">Бөбек</div>
<div class="x" style="top:629.00px;font-size:19px;line-height:19px;color:#000;font-family:'Liberation Serif',serif;right:1223.45px;text-align:right;letter-spacing:-0.45px;">597</div>
<div class="x" style="top:629.00px;font-size:19px;line-height:19px;color:#000;font-family:'Liberation Serif',serif;right:1010.45px;text-align:right;letter-spacing:-0.45px;">426705</div>
<div class="x" style="top:654.00px;font-size:19px;line-height:19px;color:#000;font-family:'Liberation Serif',serif;left:363px;letter-spacing:-0.1px;">Ғылым</div>
<div class="x" style="top:654.00px;font-size:19px;line-height:19px;color:#000;font-family:'Liberation Serif',serif;right:1223.45px;text-align:right;letter-spacing:-0.45px;">2</div>
<div class="x" style="top:654.00px;font-size:19px;line-height:19px;color:#000;font-family:'Liberation Serif',serif;right:1010.45px;text-align:right;letter-spacing:-0.45px;">3600</div>
<div class="x" style="top:679.00px;font-size:19px;line-height:19px;color:#000;font-family:'Liberation Serif',serif;left:363px;letter-spacing:-0.1px;">Express Publishinq</div>
<div class="x" style="top:679.00px;font-size:19px;line-height:19px;color:#000;font-family:'Liberation Serif',serif;right:1223.45px;text-align:right;letter-spacing:-0.45px;">861</div>
<div class="x" style="top:679.00px;font-size:19px;line-height:19px;color:#000;font-family:'Liberation Serif',serif;right:1010.45px;text-align:right;letter-spacing:-0.45px;">1250650</div>
<div class="x" style="top:704.00px;font-size:19px;line-height:19px;color:#000;font-family:'Liberation Serif',serif;left:363px;letter-spacing:-0.1px;">Келешек</div>
<div class="x" style="top:704.00px;font-size:19px;line-height:19px;color:#000;font-family:'Liberation Serif',serif;right:1223.45px;text-align:right;letter-spacing:-0.45px;">18</div>
<div class="x" style="top:704.00px;font-size:19px;line-height:19px;color:#000;font-family:'Liberation Serif',serif;right:1010.45px;text-align:right;letter-spacing:-0.45px;">48600</div>
<div class="x" style="top:729.00px;font-size:19px;line-height:19px;color:#000;font-family:'Liberation Serif',serif;left:363px;letter-spacing:-0.1px;">Кокжиек</div>
<div class="x" style="top:729.00px;font-size:19px;line-height:19px;color:#000;font-family:'Liberation Serif',serif;right:1223.45px;text-align:right;letter-spacing:-0.45px;">30</div>
<div class="x" style="top:729.00px;font-size:19px;line-height:19px;color:#000;font-family:'Liberation Serif',serif;right:1010.45px;text-align:right;letter-spacing:-0.45px;">39000</div>
<div class="x" style="top:754.00px;font-size:19px;line-height:19px;color:#000;font-family:'Liberation Serif',serif;left:363px;letter-spacing:-0.1px;">НИШ</div>
<div class="x" style="top:754.00px;font-size:19px;line-height:19px;color:#000;font-family:'Liberation Serif',serif;right:1223.45px;text-align:right;letter-spacing:-0.45px;">800</div>
<div class="x" style="top:754.00px;font-size:19px;line-height:19px;color:#000;font-family:'Liberation Serif',serif;right:1010.45px;text-align:right;letter-spacing:-0.45px;">716800</div>
<div class="x" style="top:779.00px;font-size:19px;line-height:19px;color:#000;font-family:'Liberation Serif',serif;left:363px;letter-spacing:-0.1px;">Мектеп</div>
<div class="x" style="top:779.00px;font-size:19px;line-height:19px;color:#000;font-family:'Liberation Serif',serif;right:1223.45px;text-align:right;letter-spacing:-0.45px;">2460</div>
<div class="x" style="top:779.00px;font-size:19px;line-height:19px;color:#000;font-family:'Liberation Serif',serif;right:1010.45px;text-align:right;letter-spacing:-0.45px;">6138044</div>
<div class="x" style="top:804.00px;font-size:19px;line-height:19px;color:#000;font-family:'Liberation Serif',serif;left:363px;letter-spacing:-0.1px;">Оксфорд</div>
<div class="x" style="top:804.00px;font-size:19px;line-height:19px;color:#000;font-family:'Liberation Serif',serif;right:1223.45px;text-align:right;letter-spacing:-0.45px;">320</div>
<div class="x" style="top:804.00px;font-size:19px;line-height:19px;color:#000;font-family:'Liberation Serif',serif;right:1010.45px;text-align:right;letter-spacing:-0.45px;">732100</div>
<div class="x" style="top:829.00px;font-size:19px;line-height:19px;color:#000;font-family:'Liberation Serif',serif;left:363px;letter-spacing:-0.1px;">Бумага А4</div>
<div class="x" style="top:829.00px;font-size:19px;line-height:19px;color:#000;font-family:'Liberation Serif',serif;right:1223.45px;text-align:right;letter-spacing:-0.45px;">103</div>
<div class="x" style="top:829.00px;font-size:19px;line-height:19px;color:#000;font-family:'Liberation Serif',serif;right:1121.45px;text-align:right;letter-spacing:-0.45px;">1250</div>
<div class="x" style="top:829.00px;font-size:19px;line-height:19px;color:#000;font-family:'Liberation Serif',serif;right:1010.45px;text-align:right;letter-spacing:-0.45px;">128750</div>
<div class="x" style="top:929.00px;font-size:19px;line-height:19px;color:#000;font-family:'Liberation Serif',serif;font-weight:bold;left:253px;letter-spacing:0.27px;">Итого</div>
<div class="x" style="top:929.00px;font-size:19px;line-height:19px;color:#000;font-family:'Liberation Serif',serif;font-weight:bold;right:1222.5px;text-align:right;letter-spacing:0.5px;">10042</div>
<div class="x" style="top:929.00px;font-size:19px;line-height:19px;color:#000;font-family:'Liberation Serif',serif;font-weight:bold;right:1120.5px;text-align:right;letter-spacing:0.5px;">0</div>
<div class="x" style="top:929.00px;font-size:19px;line-height:19px;color:#000;font-family:'Liberation Serif',serif;font-weight:bold;right:1009.5px;text-align:right;letter-spacing:0.5px;">17855147</div>
<div class="a" style="left:163px;top:525px;width:751px;height:1px;background:#000;"></div>
<div class="a" style="left:163px;top:550px;width:751px;height:1px;background:#000;"></div>
<div class="a" style="left:163px;top:575px;width:751px;height:1px;background:#000;"></div>
<div class="a" style="left:163px;top:600px;width:751px;height:1px;background:#000;"></div>
<div class="a" style="left:163px;top:625px;width:751px;height:1px;background:#000;"></div>
<div class="a" style="left:163px;top:650px;width:751px;height:1px;background:#000;"></div>
<div class="a" style="left:163px;top:675px;width:751px;height:1px;background:#000;"></div>
<div class="a" style="left:163px;top:700px;width:751px;height:1px;background:#000;"></div>
<div class="a" style="left:163px;top:725px;width:751px;height:1px;background:#000;"></div>
<div class="a" style="left:163px;top:750px;width:751px;height:1px;background:#000;"></div>
<div class="a" style="left:163px;top:775px;width:751px;height:1px;background:#000;"></div>
<div class="a" style="left:163px;top:800px;width:751px;height:1px;background:#000;"></div>
<div class="a" style="left:163px;top:825px;width:751px;height:1px;background:#000;"></div>
<div class="a" style="left:163px;top:850px;width:751px;height:1px;background:#000;"></div>
<div class="a" style="left:163px;top:875px;width:751px;height:1px;background:#000;"></div>
<div class="a" style="left:163px;top:900px;width:751px;height:1px;background:#000;"></div>
<div class="a" style="left:163px;top:925px;width:751px;height:1px;background:#000;"></div>
<div class="a" style="left:163px;top:950px;width:751px;height:1px;background:#000;"></div>
<div class="a" style="left:163px;top:960px;width:751px;height:1px;background:#000;"></div>
<div class="a" style="left:163px;top:525px;width:1px;height:436px;background:#000;"></div>
<div class="a" style="left:249px;top:525px;width:1px;height:436px;background:#000;"></div>
<div class="a" style="left:359px;top:525px;width:1px;height:436px;background:#000;"></div>
<div class="a" style="left:601px;top:525px;width:1px;height:436px;background:#000;"></div>
<div class="a" style="left:700px;top:525px;width:1px;height:436px;background:#000;"></div>
<div class="a" style="left:802px;top:525px;width:1px;height:436px;background:#000;"></div>
<div class="a" style="left:913px;top:525px;width:1px;height:436px;background:#000;"></div>
<svg style="left:701px;top:926px" width="6" height="6"><polygon points="0,0 6,0 0,6" fill="#207245"/></svg>
<div class="a" style="left:24px;top:216px;width:141px;height:2px;background:#217346;"></div>
<div class="a" style="left:24px;top:242px;width:137px;height:2px;background:#217346;"></div>
<div class="a" style="left:24px;top:216px;width:2px;height:28px;background:#217346;"></div>
<div class="a" style="left:163px;top:216px;width:2px;height:23px;background:#217346;"></div>
<div class="a" style="left:160px;top:239px;width:7px;height:7px;background:#fff;"></div>
<div class="a" style="left:161px;top:240px;width:5px;height:5px;background:#217346;"></div>
<div class="a" style="left:0px;top:0px;width:1920px;height:58px;background:#217346;"></div>
<svg style="left:22px;top:8px" width="14" height="14" viewBox="0 0 14 14"><rect x="0" y="0" width="14" height="14" fill="#fff"/><rect x="2.5" y="2" width="9" height="5" fill="#217346"/><rect x="3" y="9" width="8" height="3.5" fill="#217346"/><rect x="5.5" y="10" width="3" height="2.5" fill="#fff"/></svg>
<svg style="left:50px;top:8px" width="16" height="14" viewBox="0 0 16 14"><path d="M2,5 H9 A4.5,4.5 0 0 1 9,13.5 H6" fill="none" stroke="#fff" stroke-width="1.8"/><path d="M5.5,1 L1.5,5 L5.5,9" fill="none" stroke="#fff" stroke-width="1.8"/></svg>
<svg style="left:71.5px;top:13px" width="5.0" height="4" viewBox="0 0 5.0 4"><polygon points="0,0 5.0,0 2.5,2.5" fill="#fff"/></svg>
<svg style="left:86px;top:8px" width="14" height="13" viewBox="0 0 14 13"><path d="M12,5 H6 A4,4 0 0 0 6,12.5 H7" fill="none" stroke="#5e9e78" stroke-width="1.6"/><path d="M9,1.5 L12.5,5 L9,8.5" fill="none" stroke="#5e9e78" stroke-width="1.6"/></svg>
<svg style="left:106px;top:11px" width="4" height="4" viewBox="0 0 4 4"><polygon points="0,0 4,0 2,2" fill="#5e9e78"/></svg>
<div class="a" style="left:125px;top:14px;width:7px;height:1px;background:#fff;"></div>
<svg style="left:124px;top:17px" width="9" height="4" viewBox="0 0 9 4"><polygon points="0.5,0 8.5,0 4.5,3.5" fill="#fff"/></svg>
<div class="x" style="left:892.00px;top:12.00px;font-size:11.5px;line-height:11.5px;color:#fff;font-family:'Liberation Sans',sans-serif;letter-spacing:-0.045px;">Ком Расход СШ24 - Excel</div>
<svg style="left:1751px;top:10px" width="15" height="11" viewBox="0 0 15 11"><rect x="0.5" y="0.5" width="13" height="10" fill="none" stroke="#fff"/><line x1="0.5" y1="2.5" x2="13.5" y2="2.5" stroke="#fff"/><path d="M7,9 V4.5 M5,6.5 L7,4.5 L9,6.5" fill="none" stroke="#fff"/></svg>
<div class="a" style="left:1800px;top:15px;width:10px;height:1px;background:#fff;"></div>
<svg style="left:1845px;top:9px" width="11.5" height="12" viewBox="0 0 11.5 12"><rect x="0.5" y="3.5" width="8" height="8" fill="none" stroke="#fff"/><path d="M3.5,3.5 V0.5 H11.5 V8.5 H8.5" fill="none" stroke="#fff"/></svg>
<svg style="left:1891px;top:9px" width="11.5" height="12" viewBox="0 0 11.5 12"><path d="M0.5,0.5 L11.5,11.5 M11.5,0.5 L0.5,11.5" stroke="#fff" stroke-width="1.1"/></svg>
<div class="a" style="left:63px;top:35px;width:71px;height:24px;background:#f1f1f1;"></div>
<div class="x" style="left:15.00px;top:43.00px;font-size:11.5px;line-height:11.5px;color:#fff;font-family:'Liberation Sans',sans-serif;letter-spacing:0.000px;">Файл</div>
<div class="x" style="left:149.00px;top:43.00px;font-size:11.5px;line-height:11.5px;color:#fff;font-family:'Liberation Sans',sans-serif;letter-spacing:-0.167px;">Вставка</div>
<div class="x" style="left:220.00px;top:43.00px;font-size:11.5px;line-height:11.5px;color:#fff;font-family:'Liberation Sans',sans-serif;letter-spacing:0.188px;">Разметка страницы</div>
<div class="x" style="left:356.00px;top:43.00px;font-size:11.5px;line-height:11.5px;color:#fff;font-family:'Liberation Sans',sans-serif;letter-spacing:0.667px;">Формулы</div>
<div class="x" style="left:439.00px;top:43.00px;font-size:11.5px;line-height:11.5px;color:#fff;font-family:'Liberation Sans',sans-serif;letter-spacing:0.200px;">Данные</div>
<div class="x" style="left:511.00px;top:43.00px;font-size:11.5px;line-height:11.5px;color:#fff;font-family:'Liberation Sans',sans-serif;letter-spacing:0.154px;">Рецензирование</div>
<div class="x" style="left:631.00px;top:43.00px;font-size:11.5px;line-height:11.5px;color:#fff;font-family:'Liberation Sans',sans-serif;letter-spacing:-0.500px;">Вид</div>
<div class="x" style="left:77.00px;top:43.00px;font-size:11.5px;line-height:11.5px;color:#444;font-family:'Liberation Sans',sans-serif;letter-spacing:-0.167px;">Главная</div>
<svg style="left:680px;top:39px" width="11" height="15" viewBox="0 0 11 15"><path d="M5.5,0.8 A4.7,4.7 0 0 1 8.3,9.3 L8,11 H3 L2.7,9.3 A4.7,4.7 0 0 1 5.5,0.8 Z" fill="none" stroke="#fff" stroke-width="1.1"/><line x1="3.3" y1="12.8" x2="7.7" y2="12.8" stroke="#fff" stroke-width="1.1"/></svg>
<div class="x" style="left:698.00px;top:43.00px;font-size:11.5px;line-height:11.5px;color:#fff;font-family:'Liberation Sans',sans-serif;letter-spacing:-0.095px;">Что вы хотите сделать?</div>
<div class="x" style="left:1753.00px;top:43.00px;font-size:11.5px;line-height:11.5px;color:#fff;font-family:'Liberation Sans',sans-serif;letter-spacing:0.000px;">Вход</div>
<div class="a" style="left:1789px;top:35px;width:115px;height:23px;background:#19623a;"></div>
<svg style="left:1796px;top:38px" width="18" height="18" viewBox="0 0 18 18"><circle cx="8" cy="5.5" r="4.3" fill="none" stroke="#fff" stroke-width="1.2"/><path d="M1,17 A7.5,7.5 0 0 1 10,10.2" fill="none" stroke="#fff" stroke-width="1.2"/><path d="M13,11 V17 M10,14 H16" stroke="#fff" stroke-width="1.2"/></svg>
<div class="x" style="left:1816.00px;top:43.00px;font-size:11.5px;line-height:11.5px;color:#fff;font-family:'Liberation Sans',sans-serif;letter-spacing:0.182px;">Общий доступ</div>
<div class="a" style="left:0px;top:58px;width:1920px;height:93px;background:#f1f1f1;"></div>
<div class="a" style="left:0px;top:151px;width:1920px;height:1px;background:#d5d5d5;"></div>
<div class="a" style="left:197px;top:64px;width:1px;height:83px;background:#dadada;"></div>
<div class="a" style="left:405px;top:64px;width:1px;height:83px;background:#dadada;"></div>
<div class="a" style="left:533px;top:64px;width:1px;height:83px;background:#dadada;"></div>
<div class="a" style="left:772px;top:64px;width:1px;height:83px;background:#dadada;"></div>
<div class="a" style="left:912px;top:64px;width:1px;height:83px;background:#dadada;"></div>
<div class="a" style="left:1462px;top:64px;width:1px;height:83px;background:#dadada;"></div>
<div class="a" style="left:1620px;top:64px;width:1px;height:83px;background:#dadada;"></div>
<div class="a" style="left:1869px;top:64px;width:1px;height:83px;background:#dadada;"></div>
<div class="a" style="left:285px;top:104px;width:1px;height:16px;background:#d8d8d8;"></div>
<div class="a" style="left:328px;top:104px;width:1px;height:16px;background:#d8d8d8;"></div>
<div class="a" style="left:480px;top:70px;width:1px;height:22px;background:#d8d8d8;"></div>
<div class="a" style="left:480px;top:102px;width:1px;height:20px;background:#d8d8d8;"></div>
<div class="a" style="left:859px;top:102px;width:1px;height:20px;background:#d8d8d8;"></div>
<div class="x" style="left:52.00px;top:138.00px;font-size:11.5px;line-height:11.5px;color:#666;font-family:'Liberation Sans',sans-serif;letter-spacing:-0.273px;">Буфер обмена</div>
<div class="x" style="left:275.00px;top:138.00px;font-size:11.5px;line-height:11.5px;color:#666;font-family:'Liberation Sans',sans-serif;letter-spacing:-0.250px;">Шрифт</div>
<div class="x" style="left:541.00px;top:138.00px;font-size:11.5px;line-height:11.5px;color:#666;font-family:'Liberation Sans',sans-serif;letter-spacing:-0.091px;">Выравнивание</div>
<div class="x" style="left:818.00px;top:138.00px;font-size:11.5px;line-height:11.5px;color:#666;font-family:'Liberation Sans',sans-serif;letter-spacing:-0.750px;">Число</div>
<div class="x" style="left:1172.00px;top:138.00px;font-size:11.5px;line-height:11.5px;color:#666;font-family:'Liberation Sans',sans-serif;letter-spacing:-0.750px;">Стили</div>
<div class="x" style="left:1521.00px;top:138.00px;font-size:11.5px;line-height:11.5px;color:#666;font-family:'Liberation Sans',sans-serif;letter-spacing:0.000px;">Ячейки</div>
<div class="x" style="left:1701.00px;top:138.00px;font-size:11.5px;line-height:11.5px;color:#666;font-family:'Liberation Sans',sans-serif;letter-spacing:-0.077px;">Редактирование</div>
<svg style="left:187px;top:140px" width="8" height="8" viewBox="0 0 8 8"><path d="M0.5,6 V0.5 H6" fill="none" stroke="#777"/><path d="M2.5,2.5 L7,7 M4,7 H7 V4" fill="none" stroke="#777"/></svg>
<svg style="left:394px;top:140px" width="8" height="8" viewBox="0 0 8 8"><path d="M0.5,6 V0.5 H6" fill="none" stroke="#777"/><path d="M2.5,2.5 L7,7 M4,7 H7 V4" fill="none" stroke="#777"/></svg>
<svg style="left:762px;top:140px" width="8" height="8" viewBox="0 0 8 8"><path d="M0.5,6 V0.5 H6" fill="none" stroke="#777"/><path d="M2.5,2.5 L7,7 M4,7 H7 V4" fill="none" stroke="#777"/></svg>
<svg style="left:901px;top:140px" width="8" height="8" viewBox="0 0 8 8"><path d="M0.5,6 V0.5 H6" fill="none" stroke="#777"/><path d="M2.5,2.5 L7,7 M4,7 H7 V4" fill="none" stroke="#777"/></svg>
<svg style="left:18px;top:65px" width="30" height="35" viewBox="0 0 30 35"><rect x="1" y="6" width="22" height="25" fill="#f0c779"/><rect x="6" y="3" width="12" height="5" fill="#555"/><rect x="10" y="1" width="4" height="3" fill="#555"/><path d="M13.5,16.5 H23 L28.5,22 V34.5 H13.5 Z" fill="#fff" stroke="#555"/><path d="M23,16.5 V22 H28.5" fill="none" stroke="#555"/></svg>
<div class="x" style="left:6.00px;top:103.00px;font-size:11.5px;line-height:11.5px;color:#333;font-family:'Liberation Sans',sans-serif;letter-spacing:-0.143px;">Вставить</div>
<svg style="left:27.5px;top:122px" width="5.0" height="4" viewBox="0 0 5.0 4"><polygon points="0,0 5.0,0 2.5,2.5" fill="#555"/></svg>
<svg style="left:61px;top:65px" width="15" height="16" viewBox="0 0 15 16"><path d="M4,1 L9.5,10 M11,1 L5.5,10" stroke="#555" stroke-width="1.7"/><circle cx="3.5" cy="12.5" r="2.4" fill="#fff" stroke="#5a7ea8" stroke-width="1.2"/><circle cx="11.5" cy="12.5" r="2.4" fill="#fff" stroke="#5a7ea8" stroke-width="1.2"/></svg>
<div class="x" style="left:79.00px;top:69.00px;font-size:11.5px;line-height:11.5px;color:#333;font-family:'Liberation Sans',sans-serif;letter-spacing:0.000px;">Вырезать</div>
<svg style="left:60px;top:89px" width="16" height="15" viewBox="0 0 16 15"><path d="M0.5,0.5 H6 L8,2.5 V10.5 H0.5 Z" fill="#fff" stroke="#555"/><path d="M2.5,3.5 H5 M2.5,5.5 H5 M2.5,7.5 H5" stroke="#555"/><path d="M6.5,4.5 H12 L14.5,7 V13.5 H6.5 Z" fill="#fff" stroke="#555"/><path d="M8.5,8.5 H13 M8.5,10.5 H13 M8.5,6.5 H10.5" stroke="#555"/></svg>
<div class="x" style="left:79.00px;top:92.00px;font-size:11.5px;line-height:11.5px;color:#333;font-family:'Liberation Sans',sans-serif;letter-spacing:0.333px;">Копировать</div>
<svg style="left:153.5px;top:95px" width="5.0" height="4" viewBox="0 0 5.0 4"><polygon points="0,0 5.0,0 2.5,2.5" fill="#555"/></svg>
<svg style="left:58px;top:111px" width="19" height="16" viewBox="0 0 19 16"><polygon points="1,11 7,5 11,9 5,15" fill="#e3c47a"/><polygon points="7,5 10,2 14,6 11,9" fill="#555"/><path d="M12,4 L17,0.5" stroke="#555" stroke-width="3"/></svg>
<div class="x" style="left:79.00px;top:115.00px;font-size:11.5px;line-height:11.5px;color:#333;font-family:'Liberation Sans',sans-serif;letter-spacing:0.312px;">Формат по образцу</div>
<div class="a" style="left:203px;top:70px;width:154px;height:23px;background:#fff;border:1px solid #c6c6c6"></div>
<div class="a" style="left:313px;top:71px;width:1px;height:21px;background:#e1e1e1;"></div>
<div class="x" style="left:207.00px;top:77.00px;font-size:11.5px;line-height:11.5px;color:#333;font-family:'Liberation Sans',sans-serif;letter-spacing:-0.077px;">Times New Roma</div>
<svg style="left:303.5px;top:79px" width="5.0" height="4" viewBox="0 0 5.0 4"><polygon points="0,0 5.0,0 2.5,2.5" fill="#555"/></svg>
<div class="x" style="left:317px;top:76px;font-size:12px;line-height:12px;color:#333;font-family:'Liberation Sans',sans-serif">14</div>
<svg style="left:346.5px;top:79px" width="5.0" height="4" viewBox="0 0 5.0 4"><polygon points="0,0 5.0,0 2.5,2.5" fill="#555"/></svg>
<div class="x" style="left:363.00px;top:74.00px;font-size:15px;line-height:15px;color:#444;font-family:'Liberation Sans',sans-serif;letter-spacing:4.000px;">A</div>
<svg style="left:372px;top:73px" width="6" height="4" viewBox="0 0 6 4"><polygon points="0,3.5 3,0 6,3.5" fill="#3d7ab8"/></svg>
<div class="x" style="left:386.00px;top:78.00px;font-size:11.5px;line-height:11.5px;color:#444;font-family:'Liberation Sans',sans-serif;letter-spacing:4.000px;">A</div>
<svg style="left:393px;top:73px" width="6" height="4" viewBox="0 0 6 4"><polygon points="0,0 6,0 3,3.5" fill="#3d7ab8"/></svg>
<div class="x" style="left:209.00px;top:105.00px;font-size:13px;line-height:13px;color:#333;font-family:'Liberation Sans',sans-serif;letter-spacing:-1.000px;font-weight:bold;">Ж</div>
<div class="x" style="left:230px;top:104.5px;font-size:13px;line-height:13px;font-weight:bold;font-style:italic;color:#333;font-family:'Liberation Sans',sans-serif">К</div>
<div class="x" style="left:253.00px;top:105.00px;font-size:13px;line-height:13px;color:#333;font-family:'Liberation Sans',sans-serif;letter-spacing:1.000px;font-weight:bold;">Ч</div>
<div class="a" style="left:253px;top:118px;width:11px;height:1px;background:#333;"></div>
<svg style="left:272.5px;top:110px" width="5.0" height="4" viewBox="0 0 5.0 4"><polygon points="0,0 5.0,0 2.5,2.5" fill="#555"/></svg>
<svg style="left:294px;top:105px" width="14" height="14" viewBox="0 0 14 14"><rect x="0" y="0" width="1" height="1" fill="#555"/><rect x="0" y="2" width="1" height="1" fill="#555"/><rect x="0" y="4" width="1" height="1" fill="#555"/><rect x="0" y="6" width="1" height="1" fill="#555"/><rect x="0" y="8" width="1" height="1" fill="#555"/><rect x="0" y="10" width="1" height="1" fill="#555"/><rect x="2" y="0" width="1" height="1" fill="#555"/><rect x="2" y="6" width="1" height="1" fill="#555"/><rect x="4" y="0" width="1" height="1" fill="#555"/><rect x="4" y="6" width="1" height="1" fill="#555"/><rect x="6" y="0" width="1" height="1" fill="#555"/><rect x="6" y="2" width="1" height="1" fill="#555"/><rect x="6" y="4" width="1" height="1" fill="#555"/><rect x="6" y="6" width="1" height="1" fill="#555"/><rect x="6" y="8" width="1" height="1" fill="#555"/><rect x="6" y="10" width="1" height="1" fill="#555"/><rect x="8" y="0" width="1" height="1" fill="#555"/><rect x="8" y="6" width="1" height="1" fill="#555"/><rect x="10" y="0" width="1" height="1" fill="#555"/><rect x="10" y="6" width="1" height="1" fill="#555"/><rect x="12" y="0" width="1" height="1" fill="#555"/><rect x="12" y="2" width="1" height="1" fill="#555"/><rect x="12" y="4" width="1" height="1" fill="#555"/><rect x="12" y="6" width="1" height="1" fill="#555"/><rect x="12" y="8" width="1" height="1" fill="#555"/><rect x="12" y="10" width="1" height="1" fill="#555"/><rect x="0" y="12" width="14" height="1.2" fill="#444"/></svg>
<svg style="left:315.5px;top:110px" width="5.0" height="4" viewBox="0 0 5.0 4"><polygon points="0,0 5.0,0 2.5,2.5" fill="#555"/></svg>
<svg style="left:336px;top:103px" width="16" height="18" viewBox="0 0 16 18"><path d="M7,2 L13,8 L8,13 L2,7 Z" fill="#fff" stroke="#555"/><path d="M13,8 Q15.5,10 14.5,12" fill="none" stroke="#3d7ab8" stroke-width="1.5"/><rect x="0" y="14" width="16" height="4" fill="#f4e21a"/></svg>
<svg style="left:357.5px;top:110px" width="5.0" height="4" viewBox="0 0 5.0 4"><polygon points="0,0 5.0,0 2.5,2.5" fill="#555"/></svg>
<div class="x" style="left:371.00px;top:104.00px;font-size:14px;line-height:14px;color:#444;font-family:'Liberation Sans',sans-serif;letter-spacing:4.000px;">A</div>
<div class="a" style="left:370px;top:116px;width:16px;height:4px;background:#d71d24;"></div>
<svg style="left:391.5px;top:110px" width="5.0" height="4" viewBox="0 0 5.0 4"><polygon points="0,0 5.0,0 2.5,2.5" fill="#555"/></svg>
<div class="a" style="left:414px;top:73px;width:14px;height:1px;background:#555;"></div>
<div class="a" style="left:436px;top:77px;width:14px;height:1px;background:#555;"></div>
<div class="a" style="left:414px;top:76px;width:14px;height:1px;background:#555;"></div>
<div class="a" style="left:436px;top:80px;width:14px;height:1px;background:#555;"></div>
<div class="a" style="left:414px;top:80px;width:14px;height:1px;background:#555;"></div>
<div class="a" style="left:436px;top:84px;width:14px;height:1px;background:#555;"></div>
<div class="a" style="left:454px;top:70px;width:22px;height:23px;background:#c5c5c5;"></div>
<div class="a" style="left:458px;top:82px;width:14px;height:1px;background:#555;"></div>
<div class="a" style="left:458px;top:85px;width:14px;height:1px;background:#555;"></div>
<div class="a" style="left:458px;top:89px;width:14px;height:1px;background:#555;"></div>
<div class="a" style="left:414px;top:107px;width:14px;height:1px;background:#555;"></div>
<div class="a" style="left:436px;top:107px;width:14px;height:1px;background:#555;"></div>
<div class="a" style="left:458px;top:107px;width:14px;height:1px;background:#555;"></div>
<div class="a" style="left:414px;top:110px;width:10px;height:1px;background:#555;"></div>
<div class="a" style="left:438px;top:110px;width:10px;height:1px;background:#555;"></div>
<div class="a" style="left:462px;top:110px;width:10px;height:1px;background:#555;"></div>
<div class="a" style="left:414px;top:113px;width:14px;height:1px;background:#555;"></div>
<div class="a" style="left:436px;top:113px;width:14px;height:1px;background:#555;"></div>
<div class="a" style="left:458px;top:113px;width:14px;height:1px;background:#555;"></div>
<div class="a" style="left:414px;top:116px;width:10px;height:1px;background:#555;"></div>
<div class="a" style="left:438px;top:116px;width:10px;height:1px;background:#555;"></div>
<div class="a" style="left:462px;top:116px;width:10px;height:1px;background:#555;"></div>
<svg style="left:487px;top:72px" width="18" height="18" viewBox="0 0 18 18"><g transform="rotate(-45 7 7)"><text x="-1" y="11" font-size="11" font-weight="bold" font-family="Liberation Sans" fill="#555">ab</text></g><path d="M6,17 L16,7" stroke="#555" stroke-width="1.3"/><path d="M12.5,6.5 H16.5 V10.5" fill="none" stroke="#555" stroke-width="1.3"/></svg>
<svg style="left:507.5px;top:79px" width="5.0" height="4" viewBox="0 0 5.0 4"><polygon points="0,0 5.0,0 2.5,2.5" fill="#555"/></svg>
<svg style="left:488px;top:105px" width="17" height="14" viewBox="0 0 17 14"><path d="M6,0.5 H17 M8,4.5 H17 M8,8.5 H17 M0,12.5 H17" stroke="#555"/><path d="M1,4.5 L4,2 V7 Z" fill="#3d7ab8"/><rect x="3" y="4" width="4" height="1.5" fill="#3d7ab8"/></svg>
<svg style="left:510px;top:105px" width="17" height="14" viewBox="0 0 17 14"><path d="M6,0.5 H17 M8,4.5 H17 M8,8.5 H17 M0,12.5 H17" stroke="#555"/><path d="M6,4.5 L3,2 V7 Z" fill="#3d7ab8"/><rect x="0" y="4" width="4" height="1.5" fill="#3d7ab8"/></svg>
<svg style="left:540px;top:72px" width="18" height="18" viewBox="0 0 18 18"><rect x="1.5" y="1.5" width="9" height="3" fill="#fff" stroke="#555"/><path d="M3,3 H9 M10.5,2.5 H15" stroke="#555"/><rect x="1.5" y="7.5" width="9" height="7" fill="#fff" stroke="#555"/><path d="M3,10 H9 M3,12.5 H9" stroke="#555"/><path d="M15.5,5 C16.5,9 14,10.5 11.5,10.5" fill="none" stroke="#4a6d8c" stroke-width="1.2"/><path d="M13.5,8.5 L11,10.5 L13.5,12.5" fill="none" stroke="#4a6d8c" stroke-width="1.2"/></svg>
<div class="x" style="left:560.00px;top:77.00px;font-size:11.5px;line-height:11.5px;color:#333;font-family:'Liberation Sans',sans-serif;letter-spacing:0.071px;">Перенести текст</div>
<svg style="left:541px;top:104px" width="16" height="16" viewBox="0 0 16 16"><rect x="0.5" y="0.5" width="14" height="14" fill="#fff" stroke="#555"/><path d="M0.5,3.5 H14.5 M0.5,11.5 H14.5 M7.5,0.5 V3.5 M7.5,11.5 V14.5" fill="none" stroke="#555"/><path d="M3,7.5 H12" stroke="#4a6d8c" stroke-width="1.2"/><path d="M4.5,5.5 L2.5,7.5 L4.5,9.5 M10.5,5.5 L12.5,7.5 L10.5,9.5" fill="none" stroke="#4a6d8c" stroke-width="1.2"/></svg>
<div class="x" style="left:560.00px;top:108.00px;font-size:11.5px;line-height:11.5px;color:#333;font-family:'Liberation Sans',sans-serif;letter-spacing:0.133px;">Объединить и поместить в центре</div>
<svg style="left:757.5px;top:110px" width="5.0" height="4" viewBox="0 0 5.0 4"><polygon points="0,0 5.0,0 2.5,2.5" fill="#555"/></svg>
<div class="a" style="left:777px;top:70px;width:131px;height:23px;background:#fff;border:1px solid #c6c6c6"></div>
<div class="x" style="left:781.00px;top:77.00px;font-size:11.5px;line-height:11.5px;color:#333;font-family:'Liberation Sans',sans-serif;letter-spacing:0.500px;">Общий</div>
<svg style="left:897.5px;top:79px" width="5.0" height="4" viewBox="0 0 5.0 4"><polygon points="0,0 5.0,0 2.5,2.5" fill="#555"/></svg>
<svg style="left:779px;top:103px" width="18" height="19" viewBox="0 0 18 19"><rect x="1.5" y="1.5" width="14" height="7" fill="#fff" stroke="#4a6072" stroke-width="2"/><circle cx="8.5" cy="5" r="2" fill="#4a6072"/><ellipse cx="10.5" cy="9.5" rx="3.5" ry="2.2" fill="#e9c88a"/><ellipse cx="6.5" cy="13.5" rx="3.5" ry="2.2" fill="#e9c88a"/><path d="M11,12 H15 M8,16 H11" stroke="#e9c88a" stroke-width="1.5"/></svg>
<svg style="left:801.5px;top:110px" width="5.0" height="4" viewBox="0 0 5.0 4"><polygon points="0,0 5.0,0 2.5,2.5" fill="#555"/></svg>
<div class="x" style="left:816.00px;top:105.00px;font-size:15px;line-height:15px;color:#444;font-family:'Liberation Sans',sans-serif;letter-spacing:0.000px;">%</div>
<div class="x" style="left:837.00px;top:107.00px;font-size:10px;line-height:10px;color:#444;font-family:'Liberation Sans',sans-serif;letter-spacing:-1.500px;">000</div>
<svg style="left:865px;top:103px" width="18" height="18" viewBox="0 0 18 18"><text x="11" y="9" font-size="9.5" font-family="Liberation Sans" fill="#444">0</text><text x="3" y="16.5" font-size="9.5" font-family="Liberation Sans" fill="#444">,00</text><path d="M2,5 H9 M5,2 L2,5 L5,8" fill="none" stroke="#4a6d8c" stroke-width="1.6"/></svg>
<svg style="left:888px;top:103px" width="18" height="18" viewBox="0 0 18 18"><text x="2" y="9" font-size="9.5" font-family="Liberation Sans" fill="#444">,00</text><text x="7" y="16.5" font-size="9.5" font-family="Liberation Sans" fill="#444">,0</text><path d="M1,13 H8 M5,10 L8,13 L5,16" fill="none" stroke="#4a6d8c" stroke-width="1.6"/></svg>
<svg style="left:957px;top:67px" width="31" height="30" viewBox="0 0 31 30"><rect x="0.5" y="0.5" width="27" height="24" fill="#fff" stroke="#666"/><path d="M7.5,0.5 V24.5 M14.5,0.5 V24.5 M21.5,0.5 V24.5 M0.5,6.5 H27.5 M0.5,12.5 H27.5 M0.5,18.5 H27.5" stroke="#aaa"/><rect x="8" y="1" width="6" height="5" fill="#d2603a"/><rect x="8" y="7" width="13" height="5" fill="#3d6eb0"/><rect x="8" y="13" width="9" height="5" fill="#d2603a"/><rect x="8" y="19" width="6" height="5" fill="#3d6eb0"/><rect x="14.5" y="16.5" width="15" height="13" fill="#fff" stroke="#666"/><text x="18" y="27" font-size="11" font-family="Liberation Sans" fill="#333">≠</text></svg>
<div class="x" style="left:945.00px;top:103.00px;font-size:11.5px;line-height:11.5px;color:#333;font-family:'Liberation Sans',sans-serif;letter-spacing:0.286px;">Условное</div>
<div class="x" style="left:920.00px;top:119.00px;font-size:11.5px;line-height:11.5px;color:#333;font-family:'Liberation Sans',sans-serif;letter-spacing:0.154px;">форматирование</div>
<svg style="left:1017.5px;top:122px" width="5.0" height="4" viewBox="0 0 5.0 4"><polygon points="0,0 5.0,0 2.5,2.5" fill="#555"/></svg>
<svg style="left:1059px;top:69px" width="30" height="29" viewBox="0 0 30 29"><rect x="0.5" y="0.5" width="24" height="20" fill="#fff" stroke="#777"/><rect x="7" y="5" width="18" height="16" fill="#b9c8dd"/><path d="M6.5,0.5 V20.5 M12.5,0.5 V20.5 M18.5,0.5 V20.5 M0.5,5.5 H24.5 M0.5,10.5 H24.5 M0.5,15.5 H24.5" stroke="#999"/><path d="M28,7 L17,21 L14,24 L8,28 L12,21 L15,18 Z" fill="#4a7fba"/><path d="M28,6 L20,16 L23,18 L29,10 Z" fill="#666"/></svg>
<div class="x" style="left:1028.00px;top:103.00px;font-size:11.5px;line-height:11.5px;color:#333;font-family:'Liberation Sans',sans-serif;letter-spacing:0.333px;">Форматировать</div>
<div class="x" style="left:1035.00px;top:119.00px;font-size:11.5px;line-height:11.5px;color:#333;font-family:'Liberation Sans',sans-serif;letter-spacing:0.200px;">как таблицу</div>
<svg style="left:1104.5px;top:122px" width="5.0" height="4" viewBox="0 0 5.0 4"><polygon points="0,0 5.0,0 2.5,2.5" fill="#555"/></svg>
<div class="a" style="left:1119px;top:65px;width:335px;height:62px;background:#fff;border:1px solid #c6c6c6"></div>
<div class="a" style="left:1439px;top:66px;width:14px;height:21px;background:#e6e6e6;"></div>
<div class="a" style="left:1439px;top:66px;width:1px;height:60px;background:#dcdcdc;"></div>
<div class="a" style="left:1439px;top:87px;width:14px;height:1px;background:#dcdcdc;"></div>
<div class="a" style="left:1439px;top:105px;width:14px;height:1px;background:#dcdcdc;"></div>
<svg style="left:1443px;top:74px" width="6" height="4" viewBox="0 0 6 4"><polygon points="0,3.5 3,0 6,3.5" fill="#bbb"/></svg>
<svg style="left:1443.5px;top:94px" width="5.0" height="4" viewBox="0 0 5.0 4"><polygon points="0,0 5.0,0 2.5,2.5" fill="#555"/></svg>
<div class="a" style="left:1442px;top:112px;width:8px;height:1px;background:#555;"></div>
<svg style="left:1443.5px;top:115px" width="5.0" height="4" viewBox="0 0 5.0 4"><polygon points="0,0 5.0,0 2.5,2.5" fill="#555"/></svg>
<div class="a" style="left:1120px;top:68px;width:107px;height:28px;background:#fff;border:2px solid #c6c6c6"></div>
<div class="x" style="left:1127.00px;top:77.00px;font-size:11.5px;line-height:11.5px;color:#222;font-family:'Liberation Sans',sans-serif;letter-spacing:1.500px;">Обычный</div>
<div class="a" style="left:1229px;top:71px;width:101px;height:22px;background:#ffeb9c;"></div>
<div class="x" style="left:1233.00px;top:77.00px;font-size:11.5px;line-height:11.5px;color:#9c6500;font-family:'Liberation Sans',sans-serif;letter-spacing:1.300px;">Нейтральный</div>
<div class="a" style="left:1335px;top:71px;width:101px;height:22px;background:#ffc7ce;"></div>
<div class="x" style="left:1339.00px;top:77.00px;font-size:11.5px;line-height:11.5px;color:#9c0006;font-family:'Liberation Sans',sans-serif;letter-spacing:1.400px;">Плохой</div>
<div class="a" style="left:1123px;top:99px;width:101px;height:22px;background:#c6efce;"></div>
<div class="x" style="left:1127.00px;top:105.00px;font-size:11.5px;line-height:11.5px;color:#006100;font-family:'Liberation Sans',sans-serif;letter-spacing:1.500px;">Хороший</div>
<div class="a" style="left:1229px;top:99px;width:101px;height:22px;background:#ffcc99;border:1px solid #7f7f7f"></div>
<div class="x" style="left:1233.00px;top:105.00px;font-size:11.5px;line-height:11.5px;color:#3f3f76;font-family:'Liberation Sans',sans-serif;letter-spacing:1.000px;">Ввод</div>
<div class="a" style="left:1335px;top:99px;width:101px;height:22px;background:#f2f2f2;border:1px solid #3f3f3f"></div>
<div class="x" style="left:1339.00px;top:105.00px;font-size:11.5px;line-height:11.5px;color:#3f3f3f;font-family:'Liberation Sans',sans-serif;letter-spacing:0.500px;font-weight:bold;">Вывод</div>
<svg style="left:1479px;top:67px" width="27" height="28" viewBox="0 0 27 28"><rect x="0.5" y="0.5" width="7" height="4" fill="#fff" stroke="#666"/><rect x="8.5" y="0.5" width="7" height="4" fill="#fff" stroke="#666"/><rect x="11.5" y="8.5" width="14" height="4" fill="#c8d3e0" stroke="#666"/><path d="M1,10.5 H8 M1,10.5 L4,8 M1,10.5 L4,13" fill="none" stroke="#3d7ab8" stroke-width="1.5"/><rect x="0.5" y="16.5" width="15" height="10" fill="#fff" stroke="#666"/><path d="M8,16.5 V26.5 M0.5,21.5 H15.5" stroke="#666"/></svg>
<div class="x" style="left:1468.00px;top:103.00px;font-size:11.5px;line-height:11.5px;color:#333;font-family:'Liberation Sans',sans-serif;letter-spacing:-0.286px;">Вставить</div>
<svg style="left:1489.5px;top:122px" width="5.0" height="4" viewBox="0 0 5.0 4"><polygon points="0,0 5.0,0 2.5,2.5" fill="#555"/></svg>
<svg style="left:1529px;top:67px" width="30" height="29" viewBox="0 0 30 29"><rect x="0.5" y="0.5" width="7" height="4" fill="#fff" stroke="#666"/><rect x="8.5" y="0.5" width="7" height="4" fill="#fff" stroke="#666"/><rect x="6.5" y="8.5" width="10" height="4" fill="#c8d3e0" stroke="#666"/><rect x="0.5" y="17.5" width="15" height="10" fill="#fff" stroke="#666"/><path d="M8,17.5 V27.5 M0.5,22.5 H15.5" stroke="#666"/><path d="M15,5 L28,18 M28,5 L15,18" stroke="#d2603a" stroke-width="1.8"/></svg>
<div class="x" style="left:1521.00px;top:103.00px;font-size:11.5px;line-height:11.5px;color:#333;font-family:'Liberation Sans',sans-serif;letter-spacing:0.000px;">Удалить</div>
<svg style="left:1540.5px;top:122px" width="5.0" height="4" viewBox="0 0 5.0 4"><polygon points="0,0 5.0,0 2.5,2.5" fill="#555"/></svg>
<svg style="left:1578px;top:66px" width="29" height="32" viewBox="0 0 29 32"><path d="M0.5,0 V4 M27.5,0 V4 M2,2 H26 M2,2 L4,0.5 M2,2 L4,3.5 M26,2 L24,0.5 M26,2 L24,3.5" fill="none" stroke="#3d7ab8"/><rect x="0.5" y="5.5" width="27" height="20" fill="#fff" stroke="#777"/><path d="M7.5,5.5 V25.5 M14.5,5.5 V25.5 M20.5,5.5 V25.5 M0.5,10.5 H27.5 M0.5,15.5 H27.5 M0.5,20.5 H27.5" stroke="#999"/><rect x="8" y="11" width="6.5" height="9" fill="#3d6eb0"/><path d="M0.5,25.5 V30.5 H8 L10,28 L12,30.5 H18 L20,28" fill="none" stroke="#777"/></svg>
<div class="x" style="left:1570.00px;top:103.00px;font-size:11.5px;line-height:11.5px;color:#333;font-family:'Liberation Sans',sans-serif;letter-spacing:0.200px;">Формат</div>
<svg style="left:1588.5px;top:122px" width="5.0" height="4" viewBox="0 0 5.0 4"><polygon points="0,0 5.0,0 2.5,2.5" fill="#555"/></svg>
<svg style="left:1628px;top:65px" width="16" height="15" viewBox="0 0 16 15"><path d="M15.5,1 H1.5 L8,7.5 L1.5,14 H15.5" fill="none" stroke="#444" stroke-width="2.2" stroke-linejoin="miter"/></svg>
<div class="x" style="left:1647.00px;top:69.00px;font-size:11.5px;line-height:11.5px;color:#333;font-family:'Liberation Sans',sans-serif;letter-spacing:0.375px;">Автосумма</div>
<svg style="left:1719.5px;top:72px" width="5.0" height="4" viewBox="0 0 5.0 4"><polygon points="0,0 5.0,0 2.5,2.5" fill="#555"/></svg>
<svg style="left:1629px;top:88px" width="15" height="16" viewBox="0 0 15 16"><rect x="0.5" y="0.5" width="14" height="15" fill="#fff" stroke="#666"/><rect x="0" y="0" width="15" height="3" fill="#666"/><path d="M7.5,5 V12.5 M4,9 L7.5,12.5 L11,9" fill="none" stroke="#4a6d8c" stroke-width="2.2"/></svg>
<div class="x" style="left:1647.00px;top:92.00px;font-size:11.5px;line-height:11.5px;color:#333;font-family:'Liberation Sans',sans-serif;letter-spacing:0.375px;">Заполнить</div>
<svg style="left:1708.5px;top:95px" width="5.0" height="4" viewBox="0 0 5.0 4"><polygon points="0,0 5.0,0 2.5,2.5" fill="#555"/></svg>
<svg style="left:1629px;top:111px" width="16" height="15" viewBox="0 0 16 15"><path d="M1,10 L8,2 L13,6 L6,13 Z" fill="#e07d9a"/><path d="M3,14.5 H15" stroke="#777"/></svg>
<div class="x" style="left:1648.00px;top:115.00px;font-size:11.5px;line-height:11.5px;color:#333;font-family:'Liberation Sans',sans-serif;letter-spacing:0.000px;">Очистить</div>
<svg style="left:1702.5px;top:118px" width="5.0" height="4" viewBox="0 0 5.0 4"><polygon points="0,0 5.0,0 2.5,2.5" fill="#555"/></svg>
<div class="x" style="left:1749.00px;top:66.00px;font-size:16px;line-height:16px;color:#3f6fa6;font-family:'Liberation Sans',sans-serif;letter-spacing:-1.000px;font-weight:bold;">A</div>
<div class="x" style="left:1750.00px;top:82.00px;font-size:14px;line-height:14px;color:#9a7bb7;font-family:'Liberation Sans',sans-serif;letter-spacing:0.000px;font-weight:bold;">Я</div>
<svg style="left:1761px;top:75px" width="18" height="15" viewBox="0 0 18 15"><path d="M0.5,0.5 H17 L10.5,7.5 V14.5 H7 V7.5 Z" fill="#777"/><path d="M8,8 V14" stroke="#eee" stroke-width="1"/></svg>
<div class="x" style="left:1731.00px;top:103.00px;font-size:11.5px;line-height:11.5px;color:#333;font-family:'Liberation Sans',sans-serif;letter-spacing:0.222px;">Сортировка</div>
<div class="x" style="left:1735.00px;top:119.00px;font-size:11.5px;line-height:11.5px;color:#333;font-family:'Liberation Sans',sans-serif;letter-spacing:0.000px;">и фильтр</div>
<svg style="left:1788.5px;top:122px" width="5.0" height="4" viewBox="0 0 5.0 4"><polygon points="0,0 5.0,0 2.5,2.5" fill="#555"/></svg>
<svg style="left:1817px;top:66px" width="30" height="30" viewBox="0 0 30 30"><circle cx="19" cy="10.5" r="8.5" fill="#fff" stroke="#3d7ab8" stroke-width="2.5"/><path d="M12.5,17 L3,26" stroke="#3d7ab8" stroke-width="3.5" stroke-linecap="round"/></svg>
<div class="x" style="left:1810.00px;top:103.00px;font-size:11.5px;line-height:11.5px;color:#333;font-family:'Liberation Sans',sans-serif;letter-spacing:0.333px;">Найти и</div>
<div class="x" style="left:1802.00px;top:119.00px;font-size:11.5px;line-height:11.5px;color:#333;font-family:'Liberation Sans',sans-serif;letter-spacing:0.143px;">выделить</div>
<svg style="left:1857.5px;top:122px" width="5.0" height="4" viewBox="0 0 5.0 4"><polygon points="0,0 5.0,0 2.5,2.5" fill="#555"/></svg>
<svg style="left:1900px;top:139px" width="11" height="7" viewBox="0 0 11 7"><path d="M1,6 L5.5,1.5 L10,6" fill="none" stroke="#555" stroke-width="1.5"/></svg>
<div class="a" style="left:0px;top:152px;width:1920px;height:36px;background:#e6e6e6;"></div>
<div class="a" style="left:5px;top:162px;width:101px;height:26px;background:#fff;border:1px solid #c6c6c6"></div>
<div class="x" style="left:12.00px;top:170.00px;font-size:11.5px;line-height:11.5px;color:#333;font-family:'Liberation Sans',sans-serif;letter-spacing:1.000px;">A2</div>
<svg style="left:93px;top:173px" width="6" height="4" viewBox="0 0 6 4"><polygon points="0,0 6,0 3,3" fill="#666"/></svg>
<div class="a" style="left:121px;top:170px;width:2px;height:2px;background:#999;"></div>
<div class="a" style="left:121px;top:175px;width:2px;height:2px;background:#999;"></div>
<div class="a" style="left:121px;top:180px;width:2px;height:2px;background:#999;"></div>
<div class="a" style="left:137px;top:162px;width:110px;height:26px;background:#fff;border:1px solid #c6c6c6"></div>
<svg style="left:150px;top:169px" width="11" height="11" viewBox="0 0 11 11"><path d="M0.5,0.5 L10.5,10.5 M10.5,0.5 L0.5,10.5" stroke="#b0b0b0" stroke-width="1.2"/></svg>
<svg style="left:185px;top:169px" width="13" height="10" viewBox="0 0 13 10"><path d="M0.5,5 L4.5,9 L12.5,0.5" fill="none" stroke="#b0b0b0" stroke-width="1.5"/></svg>
<div class="x" style="left:222px;top:166px;font-size:15px;line-height:15px;font-style:italic;font-weight:bold;color:#666;font-family:'Liberation Serif',serif">f<span style="font-size:11px">x</span></div>
<div class="a" style="left:250px;top:162px;width:1665px;height:26px;background:#fff;border:1px solid #c6c6c6"></div>
<svg style="left:1902px;top:172px" width="9" height="6" viewBox="0 0 9 6"><path d="M0.5,0.5 L4.5,4.5 L8.5,0.5" fill="none" stroke="#555" stroke-width="1.5"/></svg>
<div class="a" style="left:1899px;top:188px;width:21px;height:802px;background:#e6e6e6;"></div>
<div class="a" style="left:1902px;top:215px;width:15px;height:24px;background:#dadada;"></div>
<div class="a" style="left:1902px;top:200px;width:15px;height:15px;background:#fff;border:1px solid #a6a6a6"></div>
<svg style="left:1906px;top:205px" width="8" height="5" viewBox="0 0 8 5"><polygon points="0,4 4,0 8,4" fill="#777"/></svg>
<div class="a" style="left:1902px;top:239px;width:15px;height:737px;background:#fff;border:1px solid #b0b0b0"></div>
<div class="a" style="left:1902px;top:976px;width:15px;height:14px;background:#fff;border:1px solid #b0b0b0"></div>
<div class="a" style="left:1903px;top:975px;width:13px;height:1px;background:#a6a6a6;"></div>
<svg style="left:1906px;top:981px" width="8" height="5" viewBox="0 0 8 5"><polygon points="0,0 8,0 4,4" fill="#777"/></svg>
<div class="a" style="left:0px;top:990px;width:1920px;height:28px;background:#e6e6e6;"></div>
<div class="a" style="left:0px;top:990px;width:1899px;height:1px;background:#a9a9a9;"></div>
<div class="a" style="left:0px;top:1018px;width:1920px;height:1px;background:#c6c6c6;"></div>
<svg style="left:27px;top:999px" width="5" height="8" viewBox="0 0 5 8"><polygon points="4.5,0 4.5,8 0,4" fill="#bdbdbd"/></svg>
<svg style="left:55px;top:999px" width="5" height="8" viewBox="0 0 5 8"><polygon points="0,0 0,8 4.5,4" fill="#bdbdbd"/></svg>
<div class="a" style="left:100px;top:994px;width:1px;height:19px;background:#a9a9a9;"></div>
<div class="a" style="left:151px;top:994px;width:1px;height:19px;background:#a9a9a9;"></div>
<div class="a" style="left:246px;top:994px;width:1px;height:19px;background:#a9a9a9;"></div>
<div class="a" style="left:306px;top:994px;width:1px;height:19px;background:#a9a9a9;"></div>
<div class="a" style="left:530px;top:994px;width:1px;height:19px;background:#a9a9a9;"></div>
<div class="a" style="left:371px;top:991px;width:84px;height:27px;background:#fff;"></div>
<div class="a" style="left:371px;top:1014px;width:84px;height:2px;background:#217346;"></div>
<div class="a" style="left:370px;top:991px;width:1px;height:25px;background:#a9a9a9;"></div>
<div class="a" style="left:454px;top:991px;width:1px;height:25px;background:#a9a9a9;"></div>
<div class="x" style="left:112.00px;top:998.00px;font-size:12.5px;line-height:12.5px;color:#444;font-family:'Liberation Sans',sans-serif;letter-spacing:0.500px;">Май</div>
<div class="x" style="left:163.00px;top:998.00px;font-size:12.5px;line-height:12.5px;color:#444;font-family:'Liberation Sans',sans-serif;letter-spacing:0.429px;">ИюньСШ24</div>
<div class="x" style="left:258.00px;top:998.00px;font-size:12.5px;line-height:12.5px;color:#444;font-family:'Liberation Sans',sans-serif;letter-spacing:0.667px;">Июль</div>
<div class="x" style="left:320.00px;top:998.00px;font-size:12.5px;line-height:12.5px;color:#444;font-family:'Liberation Sans',sans-serif;letter-spacing:-0.200px;">Август</div>
<div class="x" style="left:383.00px;top:998.00px;font-size:12.5px;line-height:12.5px;color:#217346;font-family:'Liberation Sans',sans-serif;letter-spacing:-0.143px;font-weight:bold;">Сентябрь</div>
<div class="x" style="left:467.00px;top:998.00px;font-size:12.5px;line-height:12.5px;color:#444;font-family:'Liberation Sans',sans-serif;letter-spacing:0.167px;">Октябрь</div>
<svg style="left:564px;top:995px" width="17" height="17" viewBox="0 0 17 17"><circle cx="8.5" cy="8.5" r="7.5" fill="none" stroke="#666" stroke-width="1.2"/><path d="M8.5,4 V13 M4,8.5 H13" stroke="#666" stroke-width="1.5"/></svg>
<div class="a" style="left:1152px;top:999px;width:2px;height:2px;background:#999;"></div>
<div class="a" style="left:1152px;top:1003px;width:2px;height:2px;background:#999;"></div>
<div class="a" style="left:1152px;top:1007px;width:2px;height:2px;background:#999;"></div>
<div class="a" style="left:1169px;top:997px;width:730px;height:15px;background:#fff;border:1px solid #a8a8a8"></div>
<div class="a" style="left:1183px;top:997px;width:2px;height:15px;background:#a0a0a0;"></div>
<svg style="left:1173px;top:1001px" width="5" height="8" viewBox="0 0 5 8"><polygon points="4.5,0 4.5,8 0,4" fill="#555"/></svg>
<div class="a" style="left:1845px;top:998px;width:38px;height:13px;background:#e6e6e6;"></div>
<div class="a" style="left:1884px;top:997px;width:15px;height:15px;background:#fff;border:1px solid #a8a8a8"></div>
<svg style="left:1889px;top:1001px" width="5" height="8" viewBox="0 0 5 8"><polygon points="0,0 0,8 4.5,4" fill="#555"/></svg>
<div class="a" style="left:0px;top:1018px;width:1920px;height:22px;background:#f1f1f1;"></div>
<div class="a" style="left:0px;top:1018px;width:1920px;height:1px;background:#c0c0c0;"></div>
<div class="x" style="left:9.00px;top:1023.00px;font-size:11.5px;line-height:11.5px;color:#444;font-family:'Liberation Sans',sans-serif;letter-spacing:-0.200px;">Готово</div>
<div class="a" style="left:1628px;top:1019px;width:38px;height:21px;background:#c8c8c8;"></div>
<svg style="left:1640px;top:1022px" width="13" height="13" viewBox="0 0 13 13"><rect x="0" y="0" width="13" height="13" fill="#666"/><rect x="1" y="1" width="3" height="3" fill="#c8c8c8"/><rect x="1" y="5" width="3" height="3" fill="#c8c8c8"/><rect x="1" y="9" width="3" height="3" fill="#c8c8c8"/><rect x="5" y="1" width="3" height="3" fill="#c8c8c8"/><rect x="5" y="5" width="3" height="3" fill="#c8c8c8"/><rect x="5" y="9" width="3" height="3" fill="#c8c8c8"/><rect x="9" y="1" width="3" height="3" fill="#c8c8c8"/><rect x="9" y="5" width="3" height="3" fill="#c8c8c8"/><rect x="9" y="9" width="3" height="3" fill="#c8c8c8"/></svg>
<svg style="left:1678px;top:1022px" width="14" height="13" viewBox="0 0 14 13"><rect x="0.5" y="0.5" width="13" height="12" fill="none" stroke="#666"/><rect x="3.5" y="2.5" width="7" height="8" fill="none" stroke="#666"/><path d="M5,4.5 H9 M5,6.5 H9 M5,8.5 H9" stroke="#666"/></svg>
<svg style="left:1716px;top:1022px" width="14" height="13" viewBox="0 0 14 13"><rect x="0.5" y="0.5" width="13" height="12" fill="none" stroke="#666"/><path d="M4.5,0.5 V6.5 H0.5 M7.5,0.5 V6.5 H4.5" fill="none" stroke="#666"/></svg>
<div class="a" style="left:1747px;top:1028px;width:7px;height:2px;background:#555;"></div>
<div class="a" style="left:1757px;top:1028px;width:100px;height:1px;background:#b0b0b0;"></div>
<div class="a" style="left:1806px;top:1023px;width:3px;height:11px;background:#555;"></div>
<div class="a" style="left:1860px;top:1028px;width:9px;height:2px;background:#555;"></div>
<div class="a" style="left:1864px;top:1024px;width:2px;height:10px;background:#555;"></div>
<div class="x" style="left:1885.00px;top:1024.00px;font-size:11.5px;line-height:11.5px;color:#555;font-family:'Liberation Sans',sans-serif;letter-spacing:-1.000px;">100%</div>
<div class="a" style="left:0;top:1040px;width:1920px;height:40px;background:linear-gradient(90deg,#c9e0ec 0%,#cfe3ee 30%,#d1e2ee 60%,#d3deea 100%)"></div>
<svg style="left:16px;top:1052px" width="16" height="16" viewBox="0 0 16 16"><polygon points="0,2.2 6,1.3 6,7 0,7" fill="#000"/><polygon points="7,1.2 16,0 16,7 7,7" fill="#000"/><polygon points="0,8 6,8 6,14.5 0,13.7" fill="#000"/><polygon points="7,8 16,8 16,16 7,14.7" fill="#000"/></svg>
<div class="a" style="left:48px;top:1040px;width:344px;height:40px;background:#fff;border-left:1px solid #a8a8a8;border-top:1px solid #b8b8b8"></div>
<svg style="left:60px;top:1050px" width="16" height="18" viewBox="0 0 16 18"><circle cx="10" cy="6" r="5" fill="none" stroke="#222" stroke-width="1.3"/><path d="M6.5,9.5 L1,16" stroke="#222" stroke-width="1.5"/></svg>
<div class="x" style="left:89.00px;top:1054.00px;font-size:14px;line-height:14px;color:#333;font-family:'Liberation Sans',sans-serif;letter-spacing:0.241px;">Введите здесь текст для поиска</div>
<svg style="left:406px;top:1050px" width="19" height="19" viewBox="0 0 19 19"><rect x="2.5" y="3.5" width="10" height="8" fill="none" stroke="#222"/><path d="M1,1 H14 M1,15 H14 M16.5,1 V4 M16.5,6 V9 M16.5,11 V14" stroke="#222" stroke-width="1.3"/></svg>
<svg style="left:455px;top:1050px" width="24" height="20" viewBox="0 0 24 20"><rect x="0" y="2" width="10" height="4" fill="#e8b530"/><rect x="0" y="4" width="24" height="16" fill="#f6c94f"/><rect x="5" y="10" width="14" height="4" fill="#3b7bbf"/><rect x="5" y="14" width="3" height="4" fill="#3b7bbf"/><rect x="16" y="14" width="3" height="4" fill="#3b7bbf"/></svg>
<div class="a" style="left:447px;top:1078px;width:40px;height:2px;background:#5a8fc2;"></div>
<svg style="left:505px;top:1049px" width="22" height="22" viewBox="0 0 22 22"><circle cx="11" cy="11" r="10.5" fill="#db4437"/><path d="M11,11 L20.1,5.75 A10.5,10.5 0 0 1 11,21.5 Z" fill="#f4c20d"/><path d="M11,11 L11,21.5 A10.5,10.5 0 0 1 1.9,5.75 Z" fill="#0f9d58"/><circle cx="11" cy="11" r="5" fill="#fff"/><circle cx="11" cy="11" r="3.8" fill="#4285f4"/></svg>
<div class="a" style="left:496px;top:1078px;width:40px;height:2px;background:#5a8fc2;"></div>
<div class="a" style="left:541px;top:1040px;width:48px;height:40px;background:#e0edf4;"></div>
<svg style="left:553px;top:1049px" width="25" height="22" viewBox="0 0 25 22"><rect x="8" y="2" width="16" height="18" fill="#fff" stroke="#1e7145"/><path d="M12,6 H22 M12,9 H22 M12,12 H22 M12,15 H22 M17,3 V19" stroke="#1e7145"/><path d="M0,3 L13,1 V21 L0,19 Z" fill="#1e7145"/><text x="2.5" y="15" font-size="10" font-weight="bold" font-family="Liberation Sans" fill="#fff">X</text></svg>
<div class="a" style="left:541px;top:1078px;width:48px;height:2px;background:#5a8fc2;"></div>
<svg style="left:1695px;top:1054px" width="11.5" height="8" viewBox="0 0 11.5 8"><path d="M0.5,7 L6,1.5 L11.5,7" fill="none" stroke="#222" stroke-width="1.3"/></svg>
<svg style="left:1721px;top:1051px" width="16" height="17" viewBox="0 0 16 17"><rect x="3.5" y="3.5" width="12" height="9" fill="none" stroke="#222"/><path d="M9.5,12.5 V15.5 M5,15.5 H14" stroke="#222"/><rect x="0.5" y="0.5" width="5" height="4" fill="#fff" stroke="#222"/></svg>
<svg style="left:1745px;top:1051px" width="16" height="17" viewBox="0 0 16 17"><path d="M1,6 H4 L8,2 V15 L4,11 H1 Z" fill="none" stroke="#222" stroke-width="1.1"/><path d="M10,5.5 Q12,8.5 10,11.5 M12,3.5 Q15,8.5 12,13.5" fill="none" stroke="#222" stroke-width="1.1"/></svg>
<div class="x" style="left:1772.00px;top:1054.00px;font-size:12px;line-height:12px;color:#222;font-family:'Liberation Sans',sans-serif;letter-spacing:-0.500px;">ҚАЗ</div>
<div class="x" style="left:1821.00px;top:1046.00px;font-size:11.5px;line-height:11.5px;color:#222;font-family:'Liberation Sans',sans-serif;letter-spacing:-0.750px;">13:29</div>
<div class="x" style="left:1807.00px;top:1064.00px;font-size:11.5px;line-height:11.5px;color:#222;font-family:'Liberation Sans',sans-serif;letter-spacing:-0.444px;">17.10.2019</div>
<svg style="left:1879px;top:1051px" width="17" height="17" viewBox="0 0 17 17"><path d="M0.5,0.5 H16.5 V12.5 H8 L4.5,16 V12.5 H0.5 Z" fill="none" stroke="#222" stroke-width="1.1"/></svg>
</body></html>
